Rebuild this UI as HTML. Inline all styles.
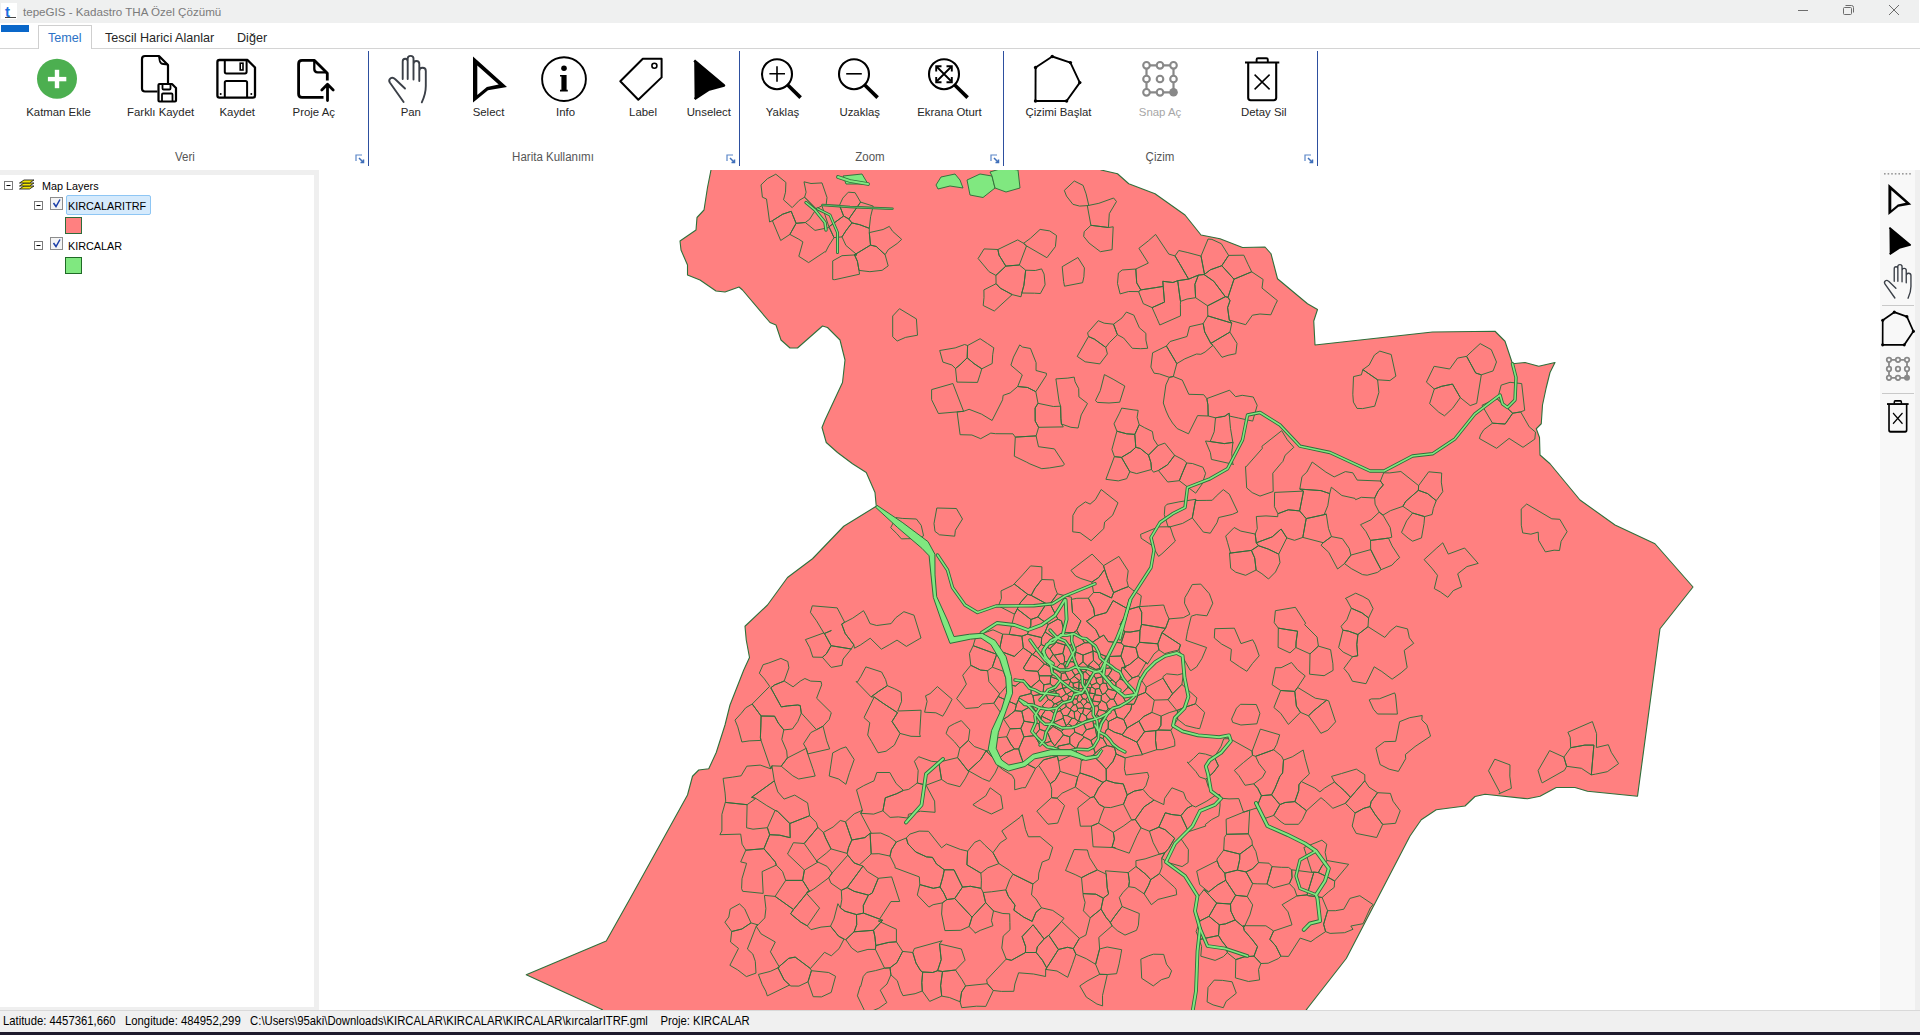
<!DOCTYPE html>
<html><head><meta charset="utf-8">
<style>
html,body{margin:0;padding:0;width:1920px;height:1035px;overflow:hidden;background:#fff;font-family:"Liberation Sans", sans-serif;}
.a{position:absolute;white-space:nowrap;}
.lbl{position:absolute;top:105px;font-size:11.4px;color:#262626;transform:translateX(-50%);line-height:14px;}
.grp{position:absolute;top:150px;font-size:12.3px;color:#555;transform:translateX(-50%) scaleX(0.935);line-height:14px;}
.tab{position:absolute;top:30px;font-size:12.6px;color:#262626;line-height:16px;}
.tree{position:absolute;font-size:11.4px;color:#000;line-height:13px;transform:scaleX(0.95);transform-origin:0 0;}
</style></head><body>
<div class="a" style="left:0;top:0;width:1920px;height:23px;background:#eff0f0;"></div>
<div class="a" style="left:1919px;top:0;width:1px;height:23px;background:#fff;"></div>
<div class="a" style="left:1px;top:3px;width:16px;height:16px;background:#fff;"></div>
<div class="a" style="left:23px;top:4px;font-size:11.6px;color:#7b7b7b;line-height:15px;">tepeGIS - Kadastro THA Özel Çözümü</div>
<div class="a" style="left:1px;top:25px;width:28px;height:7px;background:#0a67c9;"></div>
<div class="a" style="left:38px;top:25px;width:54px;height:24px;background:#fff;border:1px solid #cfcfcf;border-bottom:none;box-sizing:border-box;"></div>
<div class="a" style="left:0;top:48px;width:38px;height:1px;background:#d4d4d4;"></div>
<div class="a" style="left:92px;top:48px;width:1828px;height:1px;background:#d4d4d4;"></div>
<div class="tab" style="left:48px;color:#2b72c6;">Temel</div>
<div class="tab" style="left:105px;">Tescil Harici Alanlar</div>
<div class="tab" style="left:237px;">Diğer</div>
<div class="lbl" style="left:58.5px;">Katman Ekle</div>
<div class="lbl" style="left:160.6px;">Farklı Kaydet</div>
<div class="lbl" style="left:237.2px;">Kaydet</div>
<div class="lbl" style="left:313.8px;">Proje Aç</div>
<div class="lbl" style="left:410.8px;">Pan</div>
<div class="lbl" style="left:488.5px;">Select</div>
<div class="lbl" style="left:565.6px;">Info</div>
<div class="lbl" style="left:643px;">Label</div>
<div class="lbl" style="left:708.8px;">Unselect</div>
<div class="lbl" style="left:782.5px;">Yaklaş</div>
<div class="lbl" style="left:859.7px;">Uzaklaş</div>
<div class="lbl" style="left:949.5px;">Ekrana Oturt</div>
<div class="lbl" style="left:1058.5px;">Çizimi Başlat</div>
<div class="lbl" style="left:1160px;color:#a6a6a6;">Snap Aç</div>
<div class="lbl" style="left:1263.8px;">Detay Sil</div>
<div class="grp" style="left:185px;">Veri</div>
<div class="grp" style="left:553px;">Harita Kullanımı</div>
<div class="grp" style="left:870px;">Zoom</div>
<div class="grp" style="left:1160px;">Çizim</div>
<div class="a" style="left:368px;top:51px;width:1.3px;height:115px;background:#2d4f9f;"></div>
<div class="a" style="left:739px;top:51px;width:1.3px;height:115px;background:#2d4f9f;"></div>
<div class="a" style="left:1003px;top:51px;width:1.3px;height:115px;background:#2d4f9f;"></div>
<div class="a" style="left:1317px;top:51px;width:1.3px;height:115px;background:#2d4f9f;"></div>

<!-- left panel -->
<div class="a" style="left:0;top:170px;width:319px;height:840px;background:#efefef;"></div>
<div class="a" style="left:0;top:175px;width:314px;height:832px;background:#fff;"></div>
<div class="tree" style="left:42px;top:179.5px;">Map Layers</div>
<div class="a" style="left:66px;top:195px;width:85px;height:20px;background:#d5eafc;border:1px solid #8ec6f4;border-radius:2px;box-sizing:border-box;"></div>
<div class="tree" style="left:68px;top:199.5px;">KIRCALARITRF</div>
<div class="tree" style="left:68px;top:239.5px;">KIRCALAR</div>
<div class="a" style="left:65px;top:217px;width:17px;height:16.5px;background:#ff8080;border:1px solid #2e6b3b;box-sizing:border-box;"></div>
<div class="a" style="left:65px;top:257px;width:17px;height:16.5px;background:#80e880;border:1px solid #1f6a26;box-sizing:border-box;"></div>

<!-- map -->
<svg class="a" style="left:0;top:0;" width="1920" height="1035" viewBox="0 0 1920 1035">
<defs><clipPath id="mc"><rect x="319" y="170" width="1561" height="840"/></clipPath></defs>
<g clip-path="url(#mc)">
<polygon points="712.00,160.00 711.00,170.00 707.50,187.50 704.00,210.00 697.00,217.50 696.00,230.00 680.00,241.00 681.00,250.00 687.50,265.00 687.50,275.00 700.00,280.00 716.00,291.00 725.00,292.00 739.00,287.00 742.50,290.00 770.00,322.50 776.00,325.00 781.00,340.00 790.00,348.00 797.50,348.00 822.50,326.00 827.50,327.50 840.00,340.00 845.00,360.00 842.50,382.50 825.00,420.00 822.00,427.50 826.25,442.50 837.50,452.50 852.50,463.75 866.25,472.50 875.00,492.50 876.25,506.25 843.75,526.25 812.50,558.75 787.50,577.50 767.50,605.00 745.00,626.25 746.25,640.00 749.50,657.50 743.75,670.00 730.00,705.00 725.00,725.00 716.25,752.50 708.75,768.75 698.75,770.00 692.50,776.25 687.50,795.00 630.00,898.75 606.25,941.00 526.25,974.75 602.50,1009.75 580.00,1020.00 1320.00,1020.00 1306.25,1009.75 1346.25,958.50 1410.00,836.00 1421.25,819.75 1436.25,809.75 1465.00,806.00 1475.00,796.50 1485.00,794.25 1527.50,798.75 1540.00,796.25 1556.25,787.50 1575.00,787.50 1587.50,791.25 1637.50,796.25 1660.00,628.75 1693.00,587.00 1655.00,543.75 1615.00,525.00 1580.00,500.00 1550.00,463.75 1540.00,455.00 1539.50,437.50 1536.25,428.75 1541.25,423.75 1542.50,405.00 1546.25,387.50 1550.00,372.50 1555.00,362.50 1538.75,366.25 1525.00,362.50 1512.50,363.75 1505.00,341.25 1495.00,331.25 1432.50,332.00 1315.00,345.00 1313.75,321.00 1317.50,309.50 1307.50,303.75 1277.50,278.75 1271.00,253.75 1265.00,247.00 1242.50,247.50 1220.00,238.75 1201.00,235.00 1185.00,215.00 1155.00,193.75 1128.75,183.75 1117.50,173.75 1101.00,170.00 1095.00,160.00" fill="#ff8080" stroke="#2f6f3a" stroke-width="1.1" stroke-linejoin="round"/>
<path d="M1095.5 715.9 L1096.5 714.6 L1098.8 709.5 L1097.9 705.5 L1091.6 706.9 L1089.9 709.1 L1091.2 710.5ZM1103.1 738.6 L1107.1 745.6 L1114.5 747.4 L1116.1 754.0 L1125.2 757.9 L1134.4 755.7 L1142.5 754.8 L1136.9 742.2 L1129.1 738.3 L1122.8 735.6 L1122.3 734.7 L1114.4 732.2 L1108.2 728.7 L1106.2 730.0ZM740.7 861.9 L746.6 863.3 L742.0 878.7 L741.6 888.7 L742.7 891.3 L763.2 893.4 L762.1 871.6 L776.3 865.1 L775.4 862.1 L763.9 848.7 L745.8 850.2ZM1165.5 628.4 L1141.5 624.4 L1140.0 630.4 L1139.5 642.3 L1157.8 643.8 L1162.0 632.7ZM1124.0 645.8 L1135.9 647.7 L1139.5 642.3 L1140.0 630.4 L1130.1 632.1 L1124.8 631.8 L1121.2 642.9ZM1162.0 632.7 L1180.5 644.8 L1178.8 650.0 L1170.3 652.0 L1164.6 653.7 L1158.9 649.9 L1157.8 643.8ZM1120.1 624.8 L1124.8 631.8 L1130.1 632.1 L1140.0 630.4 L1141.5 624.4 L1141.7 612.3 L1139.0 606.6 L1128.8 609.5ZM1139.0 606.6 L1141.7 612.3 L1141.5 624.4 L1165.5 628.4 L1169.0 618.9 L1165.9 611.6 L1163.7 605.0 L1148.5 606.0 L1139.8 606.6ZM896.3 842.0 L891.4 849.8 L890.0 856.1 L895.0 866.1 L895.1 867.9 L919.3 876.9 L919.8 884.6 L933.3 888.3 L940.0 887.0 L943.0 876.3 L944.3 869.8 L936.4 863.9 L932.5 857.4 L926.6 856.9 L915.8 852.0 L908.0 843.9 L906.3 838.0ZM854.5 254.8 L857.0 254.8 L845.9 245.4 L842.0 236.9 L845.9 230.8 L851.9 222.9 L859.7 224.7 L869.3 228.3 L869.3 232.6 L870.5 245.1ZM848.8 219.0 L860.6 202.1 L873.2 206.1 L870.6 216.7 L869.3 228.3 L859.7 224.7 L851.9 222.9ZM882.1 270.3 L869.9 271.7 L859.0 270.4 L857.4 261.3 L854.5 254.8 L870.5 245.1 L876.3 246.5 L885.1 254.7 L888.2 265.9ZM1244.3 930.5 L1252.3 939.7 L1257.5 946.6 L1254.0 956.1 L1260.9 963.5 L1268.2 963.2 L1278.5 958.5 L1280.9 956.2 L1275.8 946.0 L1269.8 939.3 L1273.6 931.0 L1265.9 925.8 L1243.1 925.7ZM1062.8 688.3 L1061.5 681.2 L1068.7 679.5 L1070.1 679.6 L1070.4 681.4 L1067.8 687.2ZM1174.6 455.3 L1167.5 464.8 L1158.4 470.5 L1167.7 482.0 L1179.3 480.7 L1182.7 472.3 L1186.7 463.0 L1183.7 460.0ZM1179.3 480.7 L1195.7 493.2 L1202.1 484.0 L1205.6 473.3 L1202.9 467.2 L1192.4 463.5 L1186.7 463.0 L1182.7 472.3ZM1174.6 455.3 L1167.5 464.8 L1158.4 470.5 L1153.5 472.2 L1151.5 469.5 L1150.9 462.6 L1148.5 455.1 L1157.9 445.6 L1164.8 443.1ZM1024.0 721.2 L1021.8 711.3 L1015.0 710.7 L1007.6 716.7 L1003.7 719.1 L1010.1 728.8 L1020.9 728.4ZM1024.0 721.2 L1021.8 711.3 L1031.8 705.7 L1041.3 718.6 L1039.0 723.6ZM1032.9 695.7 L1034.5 704.0 L1031.8 705.7 L1021.8 711.3 L1015.0 710.7 L1016.4 704.7 L1019.8 696.4 L1031.1 693.5ZM1110.3 922.5 L1106.0 917.3 L1101.0 909.1 L1090.2 917.8 L1085.9 935.1 L1079.4 938.4 L1073.3 948.6 L1075.9 954.2 L1086.3 958.7 L1095.6 964.3 L1099.6 949.0 L1098.8 937.4 L1112.1 925.8ZM1054.7 669.3 L1053.5 668.8 L1046.0 664.5 L1053.2 654.3 L1054.1 655.2 L1060.3 663.6ZM1053.2 654.3 L1049.9 648.6 L1056.2 642.4 L1065.0 645.0 L1062.8 653.4 L1054.1 655.2ZM1282.9 461.4 L1285.1 455.3 L1293.8 447.3 L1287.3 439.8 L1281.7 430.7 L1261.9 446.3 L1262.4 448.3 L1246.0 466.9 L1245.5 466.7 L1246.7 487.9 L1252.2 492.6 L1260.0 496.1 L1273.2 491.5 L1272.8 473.2 L1281.2 463.2ZM906.4 646.4 L919.4 638.8 L921.0 638.0 L914.0 615.2 L903.9 611.7 L895.8 617.7 L891.1 623.6 L876.7 625.5 L870.0 623.6 L866.2 615.4 L863.5 610.7 L852.7 618.2 L844.7 622.3 L841.7 624.0 L845.2 633.5 L853.8 644.8 L854.5 648.2 L860.7 644.8 L870.2 638.2 L881.4 649.2 L889.2 644.8 L897.0 640.1ZM1071.0 709.9 L1067.5 715.7 L1071.9 718.2 L1074.8 718.6 L1074.2 711.7ZM1203.2 323.6 L1207.8 315.9 L1231.8 323.1 L1229.9 332.1 L1210.8 343.4 L1204.7 331.9ZM1210.8 343.4 L1229.9 332.1 L1237.0 343.4 L1235.8 353.7 L1228.0 355.3 L1222.0 357.3 L1213.0 345.3ZM1228.0 297.3 L1230.0 300.7 L1227.6 307.7 L1229.3 320.1 L1231.8 323.1 L1207.8 315.9 L1207.6 305.8 L1225.3 296.7ZM1056.6 694.9 L1051.5 700.6 L1048.3 699.5 L1045.6 693.7 L1054.3 690.9 L1055.7 691.0ZM1113.6 592.6 L1107.5 578.3 L1104.6 569.4 L1098.7 577.5 L1091.9 582.0 L1093.5 592.5 L1099.6 592.5 L1111.5 598.0ZM1051.1 741.2 L1039.9 744.8 L1034.8 735.6 L1039.7 729.3 L1047.3 732.0ZM1036.1 435.9 L1015.3 437.1 L1014.3 456.2 L1026.5 462.1 L1029.9 463.9 L1041.8 468.7 L1049.6 467.9 L1063.1 465.7 L1064.4 464.1 L1054.4 448.9 L1038.5 446.7ZM1135.2 819.5 L1141.0 827.9 L1136.9 835.7 L1129.2 853.2 L1112.0 847.2 L1114.4 839.0 L1113.3 832.3 L1123.2 826.2 L1131.6 820.0ZM1143.0 789.4 L1134.3 791.1 L1127.2 794.9 L1123.5 804.1 L1131.6 820.0 L1135.2 819.5 L1144.0 806.9 L1154.1 800.1 L1149.2 796.6ZM1096.8 736.2 L1103.1 738.6 L1107.1 745.6 L1100.7 748.3 L1095.3 753.2 L1090.9 740.5ZM1060.6 680.5 L1050.7 676.6 L1052.0 675.8 L1053.5 668.8 L1054.7 669.3 L1061.5 673.3ZM1114.4 456.6 L1111.9 449.5 L1116.9 431.2 L1126.7 433.8 L1134.8 434.4 L1135.8 447.3 L1130.8 451.8 L1121.5 457.4ZM1126.7 478.7 L1118.3 480.9 L1105.9 479.3 L1114.4 456.6 L1121.5 457.4 L1129.8 471.7ZM1138.2 410.4 L1133.1 409.8 L1121.7 408.1 L1119.4 413.2 L1114.0 423.8 L1116.9 431.2 L1126.7 433.8 L1134.8 434.4 L1139.2 424.7 L1137.1 417.3ZM1129.8 471.7 L1136.7 473.6 L1151.5 469.5 L1150.9 462.6 L1148.5 455.1 L1140.3 448.5 L1135.8 447.3 L1130.8 451.8 L1121.5 457.4ZM1014.3 656.4 L999.2 650.8 L1002.7 634.1 L1009.2 634.4 L1021.9 636.2 L1023.3 647.9ZM1032.6 654.8 L1032.1 653.9 L1023.3 647.9 L1021.9 636.2 L1027.4 634.2 L1036.2 636.3 L1041.7 637.6 L1041.2 644.5ZM1092.6 719.4 L1094.1 727.6 L1094.9 726.3 L1097.7 726.9 L1102.4 718.4 L1096.5 714.6 L1095.5 715.9ZM1049.0 859.4 L1052.7 847.2 L1040.1 836.7 L1028.4 836.8 L1025.6 829.6 L1022.3 814.7 L1020.0 817.4 L1001.8 830.9 L1006.7 838.6 L1000.2 842.9 L993.0 852.7 L998.9 863.6 L1009.5 870.4 L1013.0 874.2 L1032.9 884.0 L1038.4 879.6 L1038.8 873.1 L1042.2 862.0ZM1080.3 701.9 L1082.7 698.7 L1080.8 694.7 L1079.0 694.0 L1076.8 699.2 L1078.3 702.2ZM1048.2 624.4 L1045.1 631.9 L1041.7 637.6 L1036.2 636.3 L1027.4 634.2 L1030.8 625.4 L1030.9 619.5 L1037.8 617.0ZM1049.9 648.6 L1056.2 642.4 L1055.8 639.3 L1045.1 631.9 L1041.7 637.6 L1041.2 644.5ZM1133.8 315.1 L1126.4 312.1 L1122.0 317.9 L1113.5 324.2 L1117.4 334.7 L1123.6 338.0 L1132.3 348.3 L1140.7 348.7 L1147.7 348.3 L1145.9 340.1 L1145.9 333.3 L1139.4 327.8ZM980.6 670.1 L970.8 665.3 L962.7 675.3 L966.4 684.1 L956.6 698.6 L965.7 708.5 L978.3 707.5 L982.4 704.0 L993.9 703.2 L998.1 696.5 L999.7 694.0 L988.9 681.6 L987.6 670.7ZM1083.8 707.9 L1083.4 705.7 L1087.1 702.2 L1091.5 703.5 L1091.6 706.9 L1089.9 709.1 L1083.9 708.1ZM1095.4 689.2 L1095.2 693.7 L1094.4 694.7 L1101.4 695.7 L1102.4 694.6 L1099.5 688.2ZM1066.0 725.6 L1068.3 723.8 L1071.9 718.2 L1067.5 715.7 L1063.0 715.4 L1063.3 718.2ZM1345.4 803.3 L1350.5 797.3 L1364.8 780.8 L1369.0 787.2 L1377.6 792.7 L1371.1 801.7 L1370.1 806.6 L1363.8 808.3 L1355.1 813.0ZM1356.3 769.1 L1364.8 774.7 L1364.8 780.8 L1350.5 797.3 L1344.4 790.8 L1334.5 782.0 L1331.5 776.4 L1341.6 773.5ZM1382.7 824.4 L1395.5 823.3 L1400.2 810.8 L1393.0 801.2 L1390.4 793.4 L1377.6 792.7 L1371.1 801.7 L1370.1 806.6 L1375.1 814.5ZM1139.0 606.6 L1139.8 606.6 L1141.3 595.8 L1132.2 589.6 L1128.4 586.6 L1121.7 589.1 L1113.6 592.6 L1111.5 598.0 L1099.6 592.5 L1093.5 592.5 L1088.4 598.2 L1093.6 608.2 L1094.7 615.9 L1106.5 612.6 L1113.1 600.6 L1128.8 609.5ZM1096.5 714.6 L1098.8 709.5 L1106.2 711.4 L1104.2 717.0 L1102.4 718.4ZM1092.3 700.9 L1100.3 702.1 L1097.9 705.5 L1091.6 706.9 L1091.5 703.5ZM1305.6 623.1 L1295.4 607.3 L1275.4 610.7 L1274.2 622.6 L1278.3 628.1 L1285.3 629.3 L1297.6 631.2 L1296.1 641.9 L1295.9 647.5 L1304.0 651.2 L1310.0 653.9 L1318.4 646.1 L1317.1 637.1 L1304.6 624.6ZM816.4 822.6 L809.7 815.7 L789.8 823.5 L790.2 837.7 L779.8 835.2 L769.7 834.7 L763.9 848.7 L775.4 862.1 L776.3 865.1 L782.6 871.6 L785.7 880.4 L802.6 880.4 L804.4 870.1 L787.5 854.0 L793.4 842.7 L804.2 843.5 L817.8 827.4ZM1087.1 719.1 L1083.1 722.7 L1086.3 729.8 L1094.1 727.6 L1092.6 719.4ZM1306.2 518.6 L1299.6 510.9 L1288.3 509.8 L1277.9 513.7 L1277.7 516.7 L1266.0 515.9 L1256.3 516.5 L1257.3 528.7 L1255.2 534.0 L1256.3 542.8 L1272.2 536.9 L1281.1 529.0 L1286.8 537.9 L1294.5 540.3 L1302.8 537.4ZM1432.1 552.3 L1424.1 559.6 L1431.8 568.1 L1437.5 575.3 L1434.3 588.6 L1440.3 591.9 L1447.8 597.3 L1453.3 590.6 L1461.7 586.8 L1457.7 573.8 L1466.9 566.6 L1478.2 563.4 L1464.6 548.0 L1448.3 554.1 L1442.8 542.8 L1436.2 548.5ZM1204.5 274.3 L1201.0 256.1 L1187.9 252.6 L1178.8 250.5 L1175.0 255.9 L1180.5 265.2 L1188.6 279.1 L1198.4 275.1 L1204.0 274.5ZM1188.6 279.1 L1198.4 275.1 L1194.9 284.3 L1195.6 297.7 L1187.1 299.0 L1180.5 301.4 L1179.3 292.9 L1177.7 280.7ZM1204.5 274.3 L1210.4 269.8 L1221.8 265.7 L1234.0 279.2 L1228.0 297.3 L1225.3 296.7 L1213.8 281.3 L1204.0 274.5ZM1204.0 274.5 L1198.4 275.1 L1194.9 284.3 L1195.6 297.7 L1207.6 305.8 L1225.3 296.7 L1213.8 281.3ZM1204.5 274.3 L1201.0 256.1 L1208.1 239.0 L1211.9 239.4 L1221.3 243.7 L1228.6 255.4 L1221.8 265.7 L1210.4 269.8ZM1057.8 619.1 L1061.5 620.9 L1064.3 632.5 L1073.5 632.6 L1076.7 630.5 L1080.9 620.9 L1072.5 612.4 L1071.4 599.4 L1071.5 597.3 L1057.4 593.8 L1050.1 603.8ZM780.9 658.4 L768.7 663.0 L763.1 664.7 L759.3 673.2 L764.4 678.9 L769.7 686.3 L752.2 704.0 L761.1 716.0 L774.6 716.2 L778.3 723.1 L783.8 729.9 L792.4 729.0 L797.8 721.5 L801.3 713.0 L800.2 705.5 L797.7 705.0 L787.6 705.9 L781.3 706.9 L770.8 687.8 L774.5 685.0 L784.2 681.0 L788.9 667.8 L787.8 661.5ZM1113.6 592.6 L1107.5 578.3 L1104.6 569.4 L1103.5 565.7 L1118.9 556.4 L1128.2 570.8 L1126.9 580.6 L1128.4 586.6 L1121.7 589.1ZM1104.6 569.4 L1098.7 577.5 L1091.9 582.0 L1080.9 578.5 L1075.7 576.0 L1070.9 570.4 L1092.1 554.1 L1103.5 565.7ZM891.7 876.9 L878.3 878.3 L872.2 893.1 L868.4 895.1 L863.3 905.5 L863.5 913.1 L879.6 919.1 L890.9 901.6 L899.6 901.5 L899.6 901.1ZM1078.6 682.0 L1079.3 680.5 L1074.2 676.4 L1070.1 679.6 L1070.4 681.4 L1073.1 683.2ZM764.8 917.9 L758.0 924.9 L756.2 926.3 L761.1 933.9 L775.3 942.0 L770.4 951.8 L779.1 966.6 L788.8 958.3 L795.2 957.1 L810.4 968.5 L824.5 952.3 L831.3 955.8 L839.1 948.6 L844.0 939.1 L838.6 936.2 L830.5 926.2 L821.0 927.1 L811.0 929.7 L807.3 925.9 L800.7 922.1 L790.6 913.8 L793.5 909.5 L775.1 896.4 L764.4 895.4 L765.9 908.6ZM1136.9 742.2 L1142.5 754.8 L1142.9 754.2 L1156.7 749.7 L1155.5 740.3 L1155.8 730.6 L1144.5 731.7ZM1170.9 730.3 L1174.6 740.3 L1174.9 745.9 L1162.0 749.7 L1156.7 749.7 L1155.5 740.3 L1155.8 730.6 L1158.1 730.0ZM1127.1 728.0 L1138.9 721.1 L1144.5 731.7 L1136.9 742.2 L1129.1 738.3 L1122.8 735.6 L1122.3 734.7ZM1108.4 227.5 L1109.3 213.6 L1116.5 201.5 L1113.6 198.0 L1098.9 203.3 L1088.8 205.4 L1087.3 205.6 L1090.9 225.3ZM1087.3 205.6 L1079.6 206.1 L1072.9 204.3 L1066.5 196.1 L1064.3 190.4 L1074.3 181.0 L1083.1 185.4 L1086.1 193.9 L1088.8 205.4ZM1083.7 236.4 L1089.1 243.1 L1100.4 251.7 L1112.1 249.7 L1113.2 226.8 L1108.4 227.5 L1090.9 225.3 L1084.2 231.7ZM1096.9 682.7 L1095.8 678.4 L1093.6 675.1 L1089.7 676.0 L1088.0 679.8 L1091.5 685.2ZM1068.9 696.2 L1067.2 701.3 L1072.5 701.8 L1073.7 698.7 L1072.4 696.7ZM1090.4 797.7 L1075.3 787.0 L1077.8 776.9 L1079.9 772.9 L1092.7 777.1 L1103.0 782.4 L1098.4 788.2 L1094.0 796.7ZM1050.2 783.7 L1051.7 789.2 L1051.5 797.7 L1057.0 798.2 L1062.1 793.2 L1075.3 787.0 L1077.8 776.9 L1060.1 771.4 L1055.2 780.1ZM837.2 607.9 L812.3 605.8 L810.4 612.3 L816.5 620.8 L824.2 633.6 L831.4 630.5 L824.4 633.5 L831.1 645.7 L851.3 649.0 L853.8 644.8 L845.2 633.5 L841.7 624.0 L844.7 622.3ZM1224.8 873.2 L1237.4 870.1 L1246.0 871.9 L1252.6 883.6 L1247.2 896.5 L1235.6 895.3 L1225.7 880.3ZM1237.4 870.1 L1239.7 859.5 L1239.8 854.1 L1252.3 844.9 L1255.9 851.5 L1258.5 862.6 L1252.5 868.9 L1246.0 871.9ZM1208.6 891.9 L1217.6 884.9 L1225.7 880.3 L1224.8 873.2 L1219.4 866.9 L1217.1 860.8 L1196.7 871.1 L1199.7 884.6ZM890.9 974.8 L897.3 980.7 L900.5 990.6 L903.0 995.7 L915.1 993.7 L922.3 991.0 L921.8 982.6 L922.7 972.0 L920.6 970.7 L916.0 963.1 L912.8 952.5 L902.6 951.4 L896.9 962.6 L890.0 967.8ZM1282.1 904.7 L1288.0 911.8 L1292.0 924.8 L1273.6 931.0 L1269.8 939.3 L1275.8 946.0 L1280.9 956.2 L1288.5 956.4 L1300.2 938.1 L1310.9 941.7 L1315.8 938.1 L1325.6 931.6 L1323.6 924.2 L1327.6 910.7 L1322.1 897.5 L1308.5 895.7 L1307.0 894.9 L1296.9 895.9ZM1048.2 624.4 L1045.1 631.9 L1055.8 639.3 L1056.2 642.4 L1065.0 645.0 L1071.3 645.1 L1073.5 632.6 L1064.3 632.5 L1061.5 620.9 L1057.8 619.1ZM920.5 811.2 L935.1 812.3 L934.6 801.1 L926.1 785.2 L917.3 783.0 L908.7 789.4 L903.4 790.4 L896.7 793.7 L885.3 797.8 L882.9 810.8 L890.1 817.4 L898.3 816.9 L908.0 818.1 L908.4 814.3ZM1088.5 336.5 L1094.5 339.2 L1105.8 347.4 L1109.3 342.7 L1117.4 334.7 L1113.5 324.2 L1104.2 323.2 L1098.3 320.7 L1087.6 332.9ZM1093.0 651.3 L1092.7 650.6 L1106.2 656.5 L1098.9 665.4 L1093.5 660.4ZM1243.5 762.5 L1252.5 755.3 L1252.1 751.2 L1229.7 738.6 L1223.7 738.8 L1221.1 746.2 L1214.4 757.0 L1218.4 765.8 L1213.2 772.7 L1205.9 779.1 L1208.2 786.5 L1215.3 795.4 L1219.6 794.6 L1221.1 798.2 L1229.0 798.9 L1238.8 798.6 L1243.5 812.2 L1249.7 810.2 L1256.4 808.1 L1261.4 795.7 L1257.8 788.5 L1253.8 783.8 L1245.1 785.3 L1238.9 775.6 L1234.3 770.4ZM1521.2 509.1 L1521.3 525.2 L1522.7 532.9 L1530.9 534.2 L1538.2 532.1 L1538.6 540.4 L1545.4 551.9 L1554.1 550.2 L1559.5 550.5 L1561.1 541.3 L1567.1 531.7 L1559.8 519.3 L1551.8 518.8 L1526.7 504.0ZM1034.5 704.0 L1031.8 705.7 L1041.3 718.6 L1041.4 716.1 L1045.5 710.1 L1042.4 705.8 L1048.3 699.5 L1045.6 693.7 L1043.0 694.1 L1032.9 695.7ZM851.8 840.0 L848.6 847.4 L847.2 853.4 L847.8 855.2 L854.1 862.9 L859.3 864.9 L865.7 859.2 L871.2 853.9 L870.1 833.3 L864.9 837.6ZM851.8 840.0 L845.5 821.8 L840.3 820.5 L833.1 827.0 L823.4 832.4 L825.6 837.9 L831.0 848.9 L847.2 853.4 L848.6 847.4ZM1054.7 745.9 L1051.1 741.2 L1039.9 744.8 L1034.8 735.6 L1023.9 736.8 L1018.7 748.9 L1020.0 753.8 L1023.0 762.0 L1035.6 768.4 L1038.6 765.5 L1043.5 759.9 L1051.9 757.6 L1057.4 756.2 L1058.0 746.2 L1069.8 743.7 L1069.7 736.8 L1063.4 734.9ZM1095.8 678.4 L1102.7 676.6 L1103.2 676.9 L1099.7 669.1 L1100.2 668.4 L1095.9 669.5 L1093.6 675.1ZM1128.0 687.3 L1121.5 693.7 L1126.9 704.3 L1131.9 704.2 L1133.9 704.3 L1138.0 695.4ZM1113.7 699.2 L1117.1 692.3 L1121.5 693.7 L1126.9 704.3 L1117.3 705.6ZM1120.0 678.8 L1115.9 682.8 L1115.8 691.0 L1117.1 692.3 L1121.5 693.7 L1128.0 687.3 L1127.1 682.4ZM1132.4 678.0 L1138.4 675.8 L1146.3 687.1 L1145.4 692.4 L1138.0 695.4 L1128.0 687.3 L1127.1 682.4ZM878.7 691.3 L871.1 696.9 L874.2 697.0 L883.3 703.4 L897.5 712.7 L892.0 721.5 L900.0 733.4 L911.0 736.3 L920.4 736.5 L919.7 734.3 L921.1 710.2 L897.7 711.0 L901.6 701.3 L901.1 692.2 L894.7 688.8 L887.3 685.7ZM1033.6 974.0 L1045.6 976.5 L1045.7 969.4 L1046.7 967.9 L1042.5 960.3 L1036.2 952.5 L1025.5 952.5 L1011.4 960.3 L1006.2 959.1 L986.6 979.9 L987.4 983.7 L993.3 990.5 L1001.4 991.4 L1013.8 991.3 L1014.9 984.0 L1018.6 972.8ZM969.1 926.5 L974.7 932.2 L975.0 933.2 L980.2 930.4 L993.0 925.7 L991.4 920.7 L993.5 910.9 L985.6 902.5 L972.0 917.1ZM954.7 898.5 L962.5 887.1 L970.4 886.3 L981.1 888.3 L983.2 892.5 L985.6 902.5 L972.0 917.1ZM938.8 762.2 L941.5 779.4 L947.4 783.4 L959.9 786.7 L965.1 778.8 L969.1 771.1 L968.1 771.0 L957.6 757.6ZM986.1 750.8 L980.6 759.6 L968.1 771.0 L969.1 771.1 L982.6 778.7 L989.4 781.4 L995.0 773.1 L998.4 765.8 L996.3 761.1ZM959.8 748.3 L968.4 740.4 L974.3 746.5 L987.6 751.2 L986.1 750.8 L980.6 759.6 L968.1 771.0 L957.6 757.6ZM939.4 762.0 L931.5 761.3 L918.6 756.7 L914.4 761.3 L918.2 770.4 L917.3 783.0 L926.1 785.2 L941.5 779.4 L938.8 762.2ZM1216.2 496.1 L1212.2 500.3 L1206.1 500.4 L1195.6 500.5 L1195.7 499.3 L1192.3 517.9 L1197.9 525.1 L1203.4 532.1 L1210.3 533.2 L1217.0 522.7 L1218.7 517.5 L1232.3 514.4 L1237.8 512.0 L1229.3 494.2 L1223.3 489.6ZM1383.3 484.9 L1378.1 491.0 L1374.7 498.0 L1375.1 504.2 L1379.2 512.2 L1383.0 515.1 L1390.4 510.7 L1402.9 506.3 L1405.7 501.4 L1418.4 490.3 L1418.6 485.6 L1400.9 471.5 L1389.7 472.9 L1383.7 472.8 L1380.4 481.0ZM1096.9 682.7 L1100.0 685.0 L1103.1 683.0 L1102.7 676.6 L1095.8 678.4ZM1008.3 896.2 L1005.8 889.9 L991.4 891.8 L983.2 892.5 L985.6 902.5 L993.5 910.9 L1002.9 913.5 L1009.7 913.8 L1009.9 922.6 L1010.0 929.8 L1003.2 936.1 L1001.8 948.0 L1006.2 959.1 L1011.4 960.3 L1025.5 952.5 L1025.6 946.5 L1022.1 936.6 L1033.1 924.8 L1037.7 930.7 L1044.1 938.9 L1048.8 935.3 L1061.5 921.4 L1064.0 918.3 L1052.7 910.4 L1041.5 907.8 L1036.0 912.2 L1032.2 921.4 L1023.8 917.2 L1013.9 910.2 L1015.0 905.1ZM1370.5 540.4 L1370.7 549.6 L1376.0 560.1 L1381.1 569.7 L1391.9 565.2 L1396.0 560.8 L1399.7 557.6 L1392.1 545.9 L1388.5 538.1ZM1377.5 572.4 L1381.1 569.7 L1376.0 560.1 L1370.7 549.6 L1350.9 555.1 L1344.5 563.6 L1351.3 568.6 L1362.5 574.6 L1367.2 575.2ZM1072.5 612.4 L1080.9 620.9 L1076.7 630.5 L1080.1 635.8 L1084.6 642.8 L1091.9 642.6 L1099.6 637.5 L1095.8 629.7 L1086.5 621.2 L1094.7 615.9 L1093.6 608.2 L1088.4 598.2 L1076.8 598.3 L1071.4 599.4ZM1415.1 746.5 L1430.5 736.2 L1430.2 734.8 L1426.9 724.8 L1421.8 719.9 L1422.2 715.5 L1409.7 717.7 L1399.6 721.7 L1395.7 741.3 L1384.4 741.7 L1375.9 748.1 L1378.6 759.2 L1380.2 764.6 L1389.2 769.2 L1398.4 771.4 L1405.7 758.7 L1405.4 754.5ZM1050.3 710.5 L1045.5 710.1 L1042.4 705.8 L1048.3 699.5 L1051.5 700.6 L1054.2 703.9ZM1084.2 737.0 L1079.0 742.6 L1076.4 748.8 L1076.3 753.0 L1081.3 760.6 L1092.8 755.5 L1095.3 753.2 L1090.9 740.5ZM1058.5 761.2 L1076.3 753.0 L1076.4 748.8 L1069.8 743.7 L1058.0 746.2 L1057.4 756.2ZM1481.3 374.8 L1493.1 370.9 L1496.5 362.0 L1491.3 349.7 L1480.2 343.6 L1472.8 350.4 L1466.6 356.3 L1475.7 373.0ZM1053.0 726.4 L1047.3 732.0 L1051.1 741.2 L1054.7 745.9 L1063.4 734.9 L1061.5 731.5ZM1054.6 722.0 L1052.5 721.5 L1041.4 716.1 L1041.3 718.6 L1039.0 723.6 L1039.7 729.3 L1047.3 732.0 L1053.0 726.4ZM1334.7 881.0 L1334.2 887.4 L1328.3 892.0 L1322.1 897.5 L1308.5 895.7 L1307.0 894.9 L1313.9 872.1 L1318.3 872.6 L1326.8 876.6ZM1326.9 860.5 L1322.0 865.9 L1318.3 872.6 L1313.9 872.1 L1311.9 872.4 L1303.9 847.5 L1321.9 840.2 L1326.8 844.2 L1325.1 852.3ZM1064.5 661.6 L1063.6 664.1 L1060.3 663.6 L1054.1 655.2 L1062.8 653.4 L1064.4 657.0ZM1138.0 695.4 L1133.9 704.3 L1131.9 704.2 L1130.7 710.1 L1123.7 719.5 L1127.1 728.0 L1138.9 721.1 L1143.9 716.4 L1151.9 712.4 L1154.3 700.1 L1145.4 692.4ZM1103.7 635.1 L1099.6 637.5 L1091.9 642.6 L1092.7 650.6 L1106.2 656.5 L1105.9 656.3 L1108.9 656.5 L1120.9 656.0 L1124.0 645.8 L1121.2 642.9 L1108.2 641.6ZM1466.6 356.3 L1457.6 358.1 L1449.7 369.0 L1434.1 366.3 L1426.4 382.1 L1434.3 389.0 L1441.7 386.3 L1452.5 384.1 L1460.3 397.6 L1470.2 405.6 L1476.7 403.3 L1481.3 374.8 L1475.7 373.0ZM1086.2 716.0 L1082.5 713.4 L1083.9 708.1 L1089.9 709.1 L1091.2 710.5ZM824.1 632.8 L805.4 639.6 L809.8 647.8 L812.8 657.1 L822.4 657.3 L826.3 653.9 L831.1 645.7ZM1101.0 909.1 L1103.3 898.2 L1095.9 894.2 L1083.0 893.6 L1083.3 896.0 L1085.1 902.4 L1083.4 910.8 L1090.2 917.8ZM1108.6 894.0 L1103.3 898.2 L1095.9 894.2 L1083.0 893.6 L1081.5 877.7 L1089.2 873.7 L1097.3 870.0 L1106.2 874.1 L1107.2 887.7ZM1109.7 668.0 L1099.7 669.1 L1100.2 668.4 L1098.9 665.4 L1106.2 656.5 L1105.9 656.3 L1108.9 656.5ZM916.4 519.0 L902.2 518.4 L895.9 517.6 L890.7 527.7 L896.8 533.6 L901.4 538.9 L907.1 538.7 L917.4 538.7 L923.6 535.8 L921.2 525.3ZM1067.0 694.2 L1066.1 693.8 L1062.9 687.9 L1062.8 688.3 L1067.8 687.2 L1071.9 689.2 L1072.0 690.7ZM1436.2 500.7 L1442.8 491.6 L1441.3 482.1 L1441.7 473.0 L1428.7 471.8 L1418.6 485.6 L1418.4 490.3 L1427.6 493.6ZM1432.1 514.5 L1433.3 508.5 L1436.2 500.7 L1427.6 493.6 L1418.4 490.3 L1405.7 501.4 L1402.9 506.3 L1412.6 513.0 L1424.6 516.6ZM1125.6 667.2 L1120.9 656.0 L1124.0 645.8 L1135.9 647.7 L1138.3 657.1 L1129.7 664.4 L1123.3 667.6ZM1147.6 663.8 L1154.0 653.9 L1158.9 649.9 L1157.8 643.8 L1139.5 642.3 L1135.9 647.7 L1138.3 657.1ZM1053.2 654.3 L1049.9 648.6 L1041.2 644.5 L1032.6 654.8 L1037.0 657.1 L1044.4 664.0 L1046.0 664.5ZM942.3 902.9 L946.8 899.6 L943.8 893.0 L940.0 887.0 L933.3 888.3 L919.8 884.6 L917.3 895.0 L928.9 907.1 L933.1 904.7ZM942.3 902.9 L946.8 899.6 L954.7 898.5 L972.0 917.1 L969.1 926.5 L960.6 930.3 L944.9 930.6 L941.6 914.0ZM1164.6 798.3 L1163.8 804.6 L1154.1 800.1 L1144.0 806.9 L1135.2 819.5 L1141.0 827.9 L1149.4 831.2 L1158.8 827.2 L1165.3 812.8 L1171.6 814.5 L1181.0 815.6 L1187.1 808.2 L1192.3 805.6 L1186.2 799.5 L1183.5 792.3 L1171.9 787.8ZM1221.8 940.9 L1226.6 947.0 L1227.3 952.7 L1235.8 959.6 L1244.0 956.9 L1254.0 956.1 L1257.5 946.6 L1252.3 939.7 L1244.3 930.5 L1243.5 927.1 L1235.1 920.0 L1225.4 923.9 L1219.3 924.8 L1218.5 935.5ZM1243.5 812.2 L1226.1 819.3 L1226.5 834.3 L1248.4 833.8 L1249.7 810.2ZM1136.0 866.5 L1145.9 874.4 L1150.7 879.7 L1148.6 885.2 L1144.1 893.8 L1134.9 887.6 L1128.6 886.7 L1129.4 881.6 L1128.2 872.6ZM1158.8 827.2 L1165.1 829.7 L1174.7 838.3 L1168.7 848.4 L1164.8 852.8 L1161.7 858.4 L1168.2 862.6 L1182.1 866.6 L1188.1 862.6 L1188.4 849.6 L1180.5 838.1 L1188.5 831.7 L1181.0 815.6 L1171.6 814.5 L1165.3 812.8ZM1123.7 719.5 L1127.1 728.0 L1122.3 734.7 L1114.4 732.2 L1108.2 728.7 L1108.3 721.6 L1117.1 717.2ZM1345.4 803.3 L1350.5 797.3 L1344.4 790.8 L1334.5 782.0 L1324.7 788.0 L1319.9 791.9 L1314.7 787.9 L1301.2 781.5 L1298.9 784.8 L1298.7 790.7 L1294.9 801.6 L1306.5 810.7 L1321.0 797.7 L1325.2 801.1 L1332.9 808.3ZM1255.6 756.3 L1273.7 749.7 L1276.7 744.4 L1279.7 734.8 L1260.4 729.1 L1252.1 751.2 L1252.5 755.3ZM1067.7 977.3 L1057.0 971.0 L1045.7 969.4 L1046.7 967.9 L1058.4 949.5 L1067.5 947.3 L1073.3 948.6 L1075.9 954.2 L1072.4 964.5ZM1046.7 967.9 L1058.4 949.5 L1048.8 935.3 L1044.1 938.9 L1037.3 946.9 L1036.2 952.5 L1042.5 960.3ZM887.0 984.0 L890.9 974.8 L890.0 967.8 L884.6 968.2 L875.5 970.6 L866.8 972.4 L863.3 976.4 L860.7 986.5 L860.2 986.2 L857.4 995.8 L865.9 1013.5 L878.8 1008.2 L886.8 1002.6 L880.2 990.2ZM1566.6 766.3 L1581.4 768.3 L1591.3 774.9 L1593.9 745.1 L1584.9 745.1 L1570.7 747.7 L1563.9 757.1ZM1082.0 678.2 L1083.4 672.1 L1085.6 671.8 L1089.7 676.0 L1088.0 679.8 L1085.9 680.0ZM1082.2 735.3 L1074.8 732.1 L1074.0 727.5 L1078.4 721.3 L1083.1 722.7 L1086.3 729.8ZM775.8 174.2 L767.4 178.7 L761.0 184.9 L762.4 197.2 L766.5 199.0 L769.6 222.0 L772.4 220.7 L782.7 214.2 L791.2 211.3 L796.1 223.3 L805.3 222.5 L809.7 219.2 L816.2 208.9 L804.6 197.2 L799.2 200.4 L792.2 207.6 L783.5 199.8 L785.5 192.2 L785.9 182.4ZM1023.3 647.9 L1014.3 656.4 L999.2 650.8 L996.7 654.3 L992.3 667.2 L1003.4 671.3 L1008.1 684.2 L1015.4 686.1 L1023.4 679.5 L1031.1 687.2 L1039.6 679.9 L1039.3 675.8 L1037.8 671.3 L1025.7 670.5 L1023.4 668.0 L1032.1 653.9ZM1103.1 683.0 L1100.0 685.0 L1099.5 688.2 L1102.4 694.6 L1105.3 692.9 L1108.0 689.0 L1106.1 683.5ZM1216.7 903.1 L1230.5 904.0 L1230.8 911.0 L1235.1 920.0 L1225.4 923.9 L1219.3 924.8 L1209.0 916.3ZM1244.0 927.5 L1249.9 914.9 L1252.7 904.9 L1247.2 896.5 L1235.6 895.3 L1230.5 904.0 L1230.8 911.0 L1235.1 920.0ZM1204.0 889.6 L1197.5 897.8 L1195.0 909.3 L1200.0 920.9 L1209.0 916.3 L1216.7 903.1ZM1209.0 916.3 L1219.3 924.8 L1218.5 935.5 L1199.3 939.5 L1196.1 931.5 L1200.0 920.9ZM1092.3 700.9 L1100.3 702.1 L1101.2 700.3 L1101.4 695.7 L1094.4 694.7 L1092.9 699.8ZM1272.1 684.7 L1275.4 667.7 L1281.1 667.7 L1291.5 662.5 L1297.5 669.8 L1305.2 675.9 L1297.6 687.4 L1294.8 691.4 L1280.7 690.5ZM1294.8 691.4 L1296.4 706.1 L1300.4 712.3 L1308.5 715.8 L1313.7 710.7 L1326.6 700.2 L1315.3 698.2 L1297.6 687.4ZM1280.7 690.5 L1273.9 707.5 L1280.7 713.3 L1288.4 724.4 L1292.9 720.0 L1300.4 712.3 L1296.4 706.1 L1294.8 691.4ZM1352.5 656.7 L1343.2 652.1 L1338.6 647.6 L1342.9 630.2 L1348.4 631.1 L1357.9 634.5 L1356.8 644.4 L1357.7 655.8ZM1368.6 617.9 L1361.9 612.8 L1351.3 608.2 L1346.9 619.7 L1341.1 626.3 L1342.9 630.2 L1348.4 631.1 L1357.9 634.5 L1368.0 626.7ZM1103.1 683.0 L1102.7 676.6 L1103.2 676.9 L1108.2 675.8 L1112.1 679.9 L1106.1 683.5ZM1082.2 735.3 L1086.3 729.8 L1094.1 727.6 L1094.9 726.3 L1096.8 736.2 L1090.9 740.5 L1084.2 737.0ZM1234.4 628.2 L1214.8 628.7 L1214.3 638.0 L1221.7 644.1 L1231.4 649.3 L1230.4 660.5 L1239.5 666.7 L1246.8 671.3 L1252.4 663.6 L1259.2 655.8 L1255.3 644.6 L1252.7 639.8 L1241.0 643.6ZM998.4 765.8 L1002.6 769.6 L1012.1 775.3 L1014.6 779.8 L1014.7 789.8 L1022.4 787.7 L1025.4 787.7 L1035.6 768.4 L1023.0 762.0 L1020.0 753.8 L1018.7 748.9 L1014.5 749.0 L1005.1 753.1 L996.3 761.1ZM1390.2 631.0 L1384.8 637.4 L1368.0 626.7 L1357.9 634.5 L1356.8 644.4 L1357.7 655.8 L1352.5 656.7 L1343.9 668.4 L1348.5 673.9 L1352.4 681.2 L1366.0 683.7 L1374.2 666.8 L1381.8 671.5 L1392.1 679.2 L1401.1 672.8 L1407.2 667.5 L1404.2 650.4 L1413.7 643.3 L1409.4 637.8 L1407.5 628.9 L1396.3 626.1ZM996.1 283.7 L983.9 289.9 L984.0 297.5 L983.2 305.5 L994.3 311.0 L1012.2 294.6 L1000.3 288.2ZM1108.2 728.7 L1108.3 721.6 L1104.2 717.0 L1102.4 718.4 L1097.7 726.9 L1094.9 726.3 L1096.8 736.2 L1103.1 738.6 L1106.2 730.0ZM1120.9 656.0 L1108.9 656.5 L1109.7 668.0 L1112.0 669.8 L1108.2 675.8 L1112.1 679.9 L1115.9 682.8 L1120.0 678.8 L1121.9 667.5 L1125.6 667.2ZM1252.3 844.9 L1252.0 840.8 L1248.4 833.8 L1226.5 834.3 L1224.4 837.4 L1223.7 850.1 L1239.8 854.1ZM1060.3 710.6 L1063.0 715.4 L1067.5 715.7 L1071.0 709.9 L1070.2 709.0 L1066.3 706.5 L1061.5 709.9ZM1128.8 609.5 L1113.1 600.6 L1106.5 612.6 L1094.7 615.9 L1086.5 621.2 L1095.8 629.7 L1099.6 637.5 L1103.7 635.1 L1108.2 641.6 L1121.2 642.9 L1124.8 631.8 L1120.1 624.8ZM1062.8 688.3 L1062.9 687.9 L1055.7 691.0 L1054.3 690.9 L1053.0 686.4 L1061.4 681.6 L1061.5 681.2ZM1196.3 614.6 L1206.9 615.8 L1212.8 603.2 L1209.4 593.8 L1200.8 584.1 L1192.3 584.5 L1187.8 592.7 L1184.9 597.6 L1184.5 603.2 L1189.9 614.2 L1183.3 617.7 L1169.0 618.9 L1165.5 628.4 L1162.0 632.7 L1180.5 644.8 L1178.8 650.0 L1190.1 670.2 L1191.2 670.5 L1196.6 666.9 L1201.9 658.6 L1206.6 647.5 L1185.9 640.3 L1187.4 631.8 L1191.3 616.2ZM1080.3 701.9 L1083.4 705.7 L1087.1 702.2 L1085.8 699.4 L1082.7 698.7ZM1331.5 536.6 L1323.2 542.7 L1321.0 545.2 L1328.7 552.3 L1337.6 569.0 L1344.5 563.6 L1350.9 555.1 L1349.2 548.4 L1342.4 538.7ZM725.3 802.4 L721.9 814.4 L721.9 830.9 L719.9 834.7 L740.7 834.1 L742.1 844.2 L745.8 850.2 L763.9 848.7 L769.7 834.7 L767.4 827.7 L753.0 829.2 L746.6 827.8 L747.1 804.7ZM851.8 840.0 L845.5 821.8 L854.3 813.8 L862.4 810.3 L860.7 813.3 L871.3 833.3 L870.1 833.3 L864.9 837.6ZM870.1 833.3 L871.3 833.3 L880.7 833.0 L889.3 836.7 L896.3 842.0 L891.4 849.8 L890.0 856.1 L878.9 853.7 L871.2 853.9ZM1031.2 595.4 L1035.0 588.2 L1041.8 579.5 L1041.9 566.8 L1030.6 565.9 L1022.7 574.8 L1014.2 583.9 L1027.7 594.3ZM1027.7 594.3 L1014.2 583.9 L1012.7 585.3 L1001.0 590.9 L1001.4 598.4 L998.4 605.9 L1014.5 614.2 L1017.3 609.0 L1020.1 603.0ZM1050.1 603.8 L1046.3 603.7 L1031.2 595.4 L1035.0 588.2 L1041.8 579.5 L1053.6 579.9 L1055.0 587.5 L1057.4 593.8ZM1292.3 756.8 L1283.5 760.1 L1282.6 773.0 L1279.9 776.3 L1274.8 788.7 L1271.6 794.8 L1279.9 804.6 L1285.1 802.5 L1294.9 801.6 L1298.7 790.7 L1298.9 784.8 L1301.2 781.5 L1309.4 773.9 L1305.2 758.7 L1303.2 750.0ZM1246.0 871.9 L1252.6 883.6 L1257.2 883.8 L1267.0 884.0 L1272.0 866.6 L1269.0 863.2 L1258.5 862.6 L1252.5 868.9ZM1102.4 694.6 L1105.3 692.9 L1110.3 699.3 L1106.3 703.2 L1101.2 700.3 L1101.4 695.7ZM770.8 768.8 L760.2 765.1 L746.8 766.2 L741.1 775.8 L732.7 777.1 L723.1 778.4 L725.1 793.1 L725.7 801.2 L725.3 802.4 L747.1 804.7 L755.8 798.4 L751.6 797.3 L774.3 780.9 L771.9 765.8ZM1032.9 695.7 L1043.0 694.1 L1043.8 684.8 L1039.6 679.9 L1031.1 687.2 L1031.1 693.5ZM821.7 684.8 L821.1 681.6 L810.6 681.1 L804.9 678.5 L800.3 681.1 L793.1 686.8 L784.2 681.0 L774.5 685.0 L770.8 687.8 L781.3 706.9 L787.6 705.9 L797.7 705.0 L800.2 705.5 L801.3 713.0 L816.5 729.7 L823.0 726.2 L829.2 719.5 L831.3 712.7 L816.6 698.2ZM1534.8 439.1 L1535.5 432.1 L1529.2 426.8 L1520.7 411.9 L1512.7 413.2 L1505.2 424.0 L1492.5 423.2 L1483.8 429.7 L1480.5 434.9 L1479.4 438.5 L1496.6 448.3 L1509.1 438.4 L1523.0 447.3ZM766.8 805.6 L775.1 810.4 L777.6 811.3 L789.8 823.5 L809.7 815.7 L807.6 802.9 L794.7 795.1 L784.1 799.1 L777.8 791.9 L774.3 780.9 L751.6 797.3 L755.8 798.4ZM1234.0 279.2 L1228.0 297.3 L1230.0 300.7 L1227.6 307.7 L1229.3 320.1 L1245.7 324.7 L1252.4 315.2 L1259.9 314.0 L1270.8 314.8 L1275.3 304.8 L1277.4 300.6 L1262.0 288.1 L1263.1 279.4 L1251.7 271.8ZM1231.6 719.0 L1232.7 722.4 L1240.9 725.0 L1256.9 723.8 L1259.9 713.4 L1256.3 704.5 L1240.4 704.3 L1236.5 708.2ZM840.4 907.9 L844.9 911.2 L856.5 914.6 L863.5 913.1 L863.3 905.5 L868.4 895.1 L854.1 891.3 L847.2 887.6 L841.3 890.3 L841.8 899.4ZM841.3 890.3 L847.2 887.6 L863.0 866.0 L859.3 864.9 L854.1 862.9 L847.8 855.2 L832.1 873.0 L828.7 877.8 L831.0 883.2ZM873.5 930.3 L854.1 931.8 L856.7 924.7 L856.5 914.6 L863.5 913.1 L882.7 920.2ZM1282.6 773.0 L1283.5 760.1 L1281.5 756.1 L1273.7 749.7 L1255.6 756.3 L1259.0 763.6 L1265.6 771.8 L1262.3 777.6 L1253.8 783.8 L1257.8 788.5 L1261.4 795.7 L1271.6 794.8 L1274.8 788.7 L1279.9 776.3ZM1061.5 681.2 L1061.4 681.6 L1060.6 680.5 L1061.5 673.3 L1065.3 672.8 L1068.7 679.5ZM1579.1 727.4 L1567.9 732.3 L1570.2 737.3 L1570.7 747.7 L1584.9 745.1 L1593.9 745.1 L1591.3 774.9 L1595.6 774.1 L1607.3 771.7 L1618.6 763.6 L1611.3 752.3 L1608.3 744.7 L1596.4 747.5 L1596.6 733.7 L1592.4 721.6ZM1079.3 680.5 L1074.2 676.4 L1074.9 675.2 L1082.0 671.6 L1083.4 672.1 L1082.0 678.2ZM1138.9 721.1 L1144.5 731.7 L1155.8 730.6 L1158.1 730.0 L1160.9 725.3 L1161.1 716.1 L1151.9 712.4 L1143.9 716.4ZM1286.8 537.9 L1278.7 554.1 L1268.3 549.1 L1258.5 545.7 L1256.3 542.8 L1272.2 536.9 L1281.1 529.0ZM1255.2 534.0 L1256.3 542.8 L1258.5 545.7 L1251.4 550.4 L1229.5 553.2 L1230.5 553.0 L1227.5 542.3 L1225.7 536.1 L1234.2 527.5 L1240.8 531.1ZM1141.7 978.3 L1140.8 959.2 L1148.5 955.8 L1153.5 954.2 L1163.7 954.4 L1166.5 964.2 L1171.6 970.8 L1169.0 977.4 L1161.4 979.7 L1153.3 985.9ZM1019.3 265.0 L1025.7 270.2 L1023.9 285.3 L1021.8 293.0 L1021.0 296.8 L1012.2 294.6 L1000.3 288.2 L996.1 283.7 L995.9 275.4 L1005.8 266.1ZM1026.5 245.9 L1019.3 265.0 L1005.8 266.1 L999.0 255.1 L997.9 249.5 L1017.7 239.9 L1023.6 243.3ZM827.0 197.5 L822.0 182.9 L811.0 183.5 L804.0 181.8 L806.1 192.2 L804.6 197.2 L816.2 208.9 L821.9 205.7 L828.9 226.8 L843.6 216.0 L839.5 205.3 L826.1 205.3ZM1071.4 669.6 L1074.9 675.2 L1074.2 676.4 L1070.1 679.6 L1068.7 679.5 L1065.3 672.8 L1066.4 670.5ZM1031.1 687.2 L1023.4 679.5 L1015.4 686.1 L1008.1 684.2 L999.7 694.0 L998.1 696.5 L1016.4 704.7 L1019.8 696.4 L1031.1 693.5ZM1085.4 686.8 L1090.3 687.9 L1091.8 687.1 L1091.5 685.2 L1088.0 679.8 L1085.9 680.0 L1084.9 685.2ZM1013.5 357.1 L1010.9 365.2 L1022.3 374.9 L1017.7 386.5 L1027.6 387.5 L1035.8 391.7 L1046.3 375.4 L1046.5 373.3 L1036.0 370.5 L1036.1 362.7 L1030.5 348.5 L1022.5 347.0 L1019.7 344.9ZM973.2 645.7 L976.1 635.8 L993.0 629.8 L1002.7 634.1 L999.2 650.8 L996.7 654.3ZM992.3 667.2 L996.7 654.3 L973.2 645.7 L969.4 653.5 L970.8 665.3 L980.6 670.1 L987.6 670.7ZM1113.7 699.2 L1117.1 692.3 L1115.8 691.0 L1108.0 689.0 L1105.3 692.9 L1110.3 699.3ZM1348.7 864.3 L1334.7 881.0 L1326.8 876.6 L1318.3 872.6 L1322.0 865.9 L1326.9 860.5ZM775.1 896.4 L793.5 909.5 L809.0 890.5 L802.6 880.4 L785.7 880.4ZM1084.6 642.8 L1080.1 635.8 L1076.7 630.5 L1073.5 632.6 L1071.3 645.1 L1065.0 645.0 L1062.8 653.4 L1064.4 657.0 L1064.5 661.6 L1073.2 661.8 L1075.5 654.1 L1075.7 652.0 L1075.7 647.4ZM796.1 223.3 L789.9 234.4 L798.8 239.2 L802.9 241.9 L798.8 256.3 L808.6 262.6 L824.8 251.8 L825.5 252.1 L828.7 245.9 L834.0 237.6 L829.3 227.5 L815.0 230.4 L805.3 222.5ZM1087.1 719.1 L1092.6 719.4 L1095.5 715.9 L1091.2 710.5 L1086.2 716.0ZM1093.0 651.3 L1092.7 650.6 L1091.9 642.6 L1084.6 642.8 L1075.7 647.4 L1075.7 652.0 L1083.0 655.1ZM1352.2 826.0 L1356.2 833.4 L1376.7 837.5 L1382.7 824.4 L1375.1 814.5 L1370.1 806.6 L1363.8 808.3 L1355.1 813.0ZM1072.5 701.8 L1073.5 705.0 L1076.1 704.5 L1078.3 702.2 L1076.8 699.2 L1073.7 698.7ZM928.5 831.3 L919.1 831.1 L909.9 834.1 L906.3 838.0 L908.0 843.9 L915.8 852.0 L926.6 856.9 L932.5 857.4 L936.4 863.9 L944.3 869.8 L954.0 869.8 L962.5 887.1 L970.4 886.3 L981.1 888.3 L981.4 880.2 L980.9 873.2 L966.9 864.8 L967.6 851.1 L960.3 849.4 L946.4 844.0 L941.6 847.8ZM1087.1 702.2 L1091.5 703.5 L1092.3 700.9 L1092.9 699.8 L1088.1 696.6 L1085.8 699.4ZM869.8 722.8 L867.7 735.0 L871.6 741.5 L878.0 752.8 L886.1 751.2 L894.4 745.1 L900.0 733.4 L892.0 721.5 L897.5 712.7 L883.3 703.4 L874.2 697.0 L864.0 717.6ZM1140.8 289.9 L1136.7 282.8 L1135.8 269.0 L1122.2 270.0 L1118.4 273.0 L1117.5 283.5 L1120.1 293.9 L1128.7 291.5 L1138.6 291.6ZM998.9 863.6 L987.7 867.8 L980.9 873.2 L966.9 864.8 L967.6 851.1 L974.7 842.3 L979.9 840.1 L984.9 845.2 L993.0 852.7ZM1145.4 692.4 L1154.3 700.1 L1168.0 699.7 L1172.6 693.8 L1163.0 678.2 L1146.3 687.1ZM1172.6 693.8 L1181.9 684.4 L1183.5 673.4 L1177.7 674.9 L1166.6 673.8 L1163.1 676.5 L1163.0 678.2ZM1176.7 710.4 L1169.2 712.6 L1161.1 716.1 L1160.9 725.3 L1158.1 730.0 L1170.9 730.3 L1177.6 719.2 L1177.4 710.3ZM1079.2 682.2 L1078.6 682.0 L1073.1 683.2 L1073.4 686.7 L1078.9 689.0 L1078.7 688.8ZM1056.0 703.6 L1062.1 700.2 L1065.4 702.6 L1066.3 706.5 L1061.5 709.9ZM1176.7 710.4 L1168.0 699.7 L1172.6 693.8 L1181.9 684.4 L1196.9 697.9 L1195.5 703.8 L1183.8 707.7 L1177.4 710.3ZM1177.4 710.3 L1183.8 707.7 L1195.5 703.8 L1204.7 712.4 L1202.6 719.5 L1199.7 728.7 L1196.4 728.2 L1185.6 725.5 L1177.6 719.2ZM1078.4 721.3 L1078.5 721.4 L1074.8 718.6 L1071.9 718.2 L1068.3 723.8 L1074.0 727.5ZM1150.7 879.7 L1159.4 873.7 L1174.5 887.3 L1176.1 889.4 L1176.7 894.7 L1158.1 899.4 L1151.4 904.7 L1144.1 893.8 L1148.6 885.2ZM1161.7 858.4 L1162.0 867.0 L1159.4 873.7 L1150.7 879.7 L1145.9 874.4 L1136.0 866.5 L1135.9 860.7 L1145.1 858.9 L1159.3 854.2 L1164.8 852.8ZM1032.9 884.0 L1013.0 874.2 L1009.8 879.4 L1005.8 889.9 L1008.3 896.2 L1015.0 905.1 L1013.9 910.2 L1023.8 917.2 L1032.2 921.4 L1036.0 912.2 L1041.5 907.8 L1035.9 898.9 L1031.5 894.9ZM1306.2 518.6 L1326.3 514.2 L1324.2 514.5 L1327.8 505.7 L1329.7 493.6 L1320.9 490.6 L1299.8 489.1 L1303.5 491.1 L1299.6 510.9ZM1277.9 513.7 L1274.4 506.6 L1274.6 492.4 L1303.5 491.1 L1299.6 510.9 L1288.3 509.8ZM1325.9 472.1 L1312.2 462.0 L1306.9 472.0 L1302.0 476.6 L1299.8 489.1 L1320.9 490.6 L1329.7 493.6 L1331.3 487.2 L1341.9 495.5 L1355.0 498.4 L1355.6 499.7 L1361.3 497.3 L1374.7 498.0 L1378.1 491.0 L1383.3 484.9 L1380.4 481.0 L1357.2 480.1 L1352.8 472.8 L1345.4 471.6 L1334.2 476.9ZM1108.1 708.7 L1114.6 710.0 L1117.3 705.6 L1113.7 699.2 L1110.3 699.3 L1106.3 703.2ZM1107.3 974.5 L1116.6 973.7 L1119.1 963.8 L1121.1 953.1 L1121.7 949.7 L1107.2 947.0 L1099.6 949.0 L1095.6 964.3 L1099.7 974.3ZM1107.3 974.5 L1102.5 995.6 L1102.6 1005.9 L1096.9 1004.0 L1086.3 997.1 L1079.8 985.9 L1087.0 981.1 L1099.7 974.3ZM964.6 344.5 L967.6 345.5 L967.2 357.8 L960.0 364.8 L955.5 368.5 L951.9 365.0 L942.9 362.1 L939.7 350.5 L955.2 347.9ZM967.6 345.5 L980.1 338.7 L987.4 343.5 L993.8 347.8 L992.7 354.7 L992.2 363.5 L981.8 368.8 L974.0 363.6 L967.2 357.8ZM956.9 382.1 L955.5 368.5 L960.0 364.8 L967.2 357.8 L974.0 363.6 L981.8 368.8 L980.1 374.4 L977.5 382.4ZM767.4 827.7 L769.7 834.7 L779.8 835.2 L790.2 837.7 L789.8 823.5 L777.6 811.3 L775.1 810.4ZM1218.5 935.5 L1199.3 939.5 L1201.6 946.5 L1200.8 956.2 L1215.1 960.4 L1223.3 956.7 L1227.3 952.7 L1226.6 947.0 L1221.8 940.9ZM1114.6 710.0 L1117.1 717.2 L1123.7 719.5 L1130.7 710.1 L1131.9 704.2 L1126.9 704.3 L1117.3 705.6ZM1108.1 708.7 L1106.2 711.4 L1104.2 717.0 L1108.3 721.6 L1117.1 717.2 L1114.6 710.0ZM1056.6 694.9 L1061.1 697.4 L1066.1 693.8 L1062.9 687.9 L1055.7 691.0ZM1229.6 390.2 L1206.8 398.6 L1207.9 404.8 L1208.2 416.0 L1215.5 417.8 L1224.9 416.2 L1229.1 413.1 L1229.2 416.0 L1238.5 418.0 L1252.7 421.1 L1254.7 414.1 L1257.2 405.3 L1253.3 397.0 L1242.2 395.3 L1235.6 396.7ZM1061.4 681.6 L1053.0 686.4 L1050.2 683.7 L1050.7 676.6 L1060.6 680.5ZM1082.2 735.3 L1074.8 732.1 L1069.7 736.8 L1069.8 743.7 L1076.4 748.8 L1079.0 742.6 L1084.2 737.0ZM1363.1 923.7 L1370.3 907.9 L1373.1 904.6 L1359.8 895.7 L1349.9 898.4 L1343.8 909.2 L1335.5 910.7 L1327.6 910.7 L1323.6 924.2 L1325.6 931.6 L1330.1 933.4 L1344.6 932.7 L1353.0 929.3 L1350.8 926.0ZM1062.2 266.7 L1063.6 281.4 L1064.5 286.2 L1082.6 282.7 L1083.9 276.7 L1084.4 267.9 L1077.9 257.5ZM1320.9 733.3 L1315.4 725.2 L1308.5 715.8 L1313.7 710.7 L1326.6 700.2 L1328.7 700.9 L1335.6 721.8 L1327.9 730.2ZM1256.1 570.0 L1254.7 557.9 L1251.4 550.4 L1258.5 545.7 L1268.3 549.1 L1278.7 554.1 L1280.0 562.6 L1275.5 572.0 L1268.5 579.0 L1261.9 573.7ZM1245.6 575.3 L1235.7 572.2 L1230.7 568.3 L1229.5 553.2 L1251.4 550.4 L1254.7 557.9 L1256.1 570.0ZM1017.3 609.0 L1014.5 614.2 L1009.2 634.4 L1021.9 636.2 L1027.4 634.2 L1030.8 625.4 L1030.9 619.5ZM1046.3 603.7 L1031.2 595.4 L1027.7 594.3 L1020.1 603.0 L1017.3 609.0 L1030.9 619.5 L1037.8 617.0ZM806.5 893.3 L809.0 890.5 L793.5 909.5 L790.6 913.8 L800.7 922.1 L807.3 925.9 L819.6 908.1ZM1155.6 234.4 L1148.3 240.9 L1138.9 248.3 L1148.3 263.1 L1135.8 269.0 L1136.7 282.8 L1140.8 289.9 L1155.7 287.6 L1163.2 286.4 L1162.8 281.3 L1172.9 282.5 L1177.7 280.7 L1188.6 279.1 L1180.5 265.2 L1175.0 255.9 L1168.8 254.1ZM1444.5 415.8 L1452.6 408.3 L1460.3 397.6 L1452.5 384.1 L1441.7 386.3 L1434.3 389.0 L1429.6 403.6 L1438.8 412.2ZM1108.2 675.8 L1112.0 669.8 L1109.7 668.0 L1099.7 669.1 L1103.2 676.9ZM778.3 723.1 L774.6 716.2 L761.1 716.0 L760.8 727.1 L760.4 737.5 L761.0 740.4 L770.8 768.8 L771.9 765.8 L781.2 766.2 L787.3 758.0 L786.7 750.9 L781.8 739.4 L783.8 729.9ZM1080.3 701.9 L1083.4 705.7 L1083.8 707.9 L1077.6 708.4 L1076.1 704.5 L1078.3 702.2ZM1112.6 515.3 L1118.0 502.8 L1101.2 489.5 L1095.4 499.6 L1090.1 504.1 L1085.4 501.9 L1077.2 507.8 L1072.9 515.3 L1072.7 531.8 L1080.1 532.7 L1091.1 540.7 L1103.8 528.6 L1104.6 522.1ZM1093.0 651.3 L1083.0 655.1 L1083.0 661.8 L1087.5 666.0 L1093.5 660.4ZM1043.8 684.8 L1050.2 683.7 L1053.0 686.4 L1054.3 690.9 L1045.6 693.7 L1043.0 694.1ZM756.2 926.3 L758.0 924.9 L751.0 922.9 L741.9 929.0 L731.7 931.5 L730.5 942.0 L738.5 948.4 L729.9 965.3 L737.7 969.9 L746.4 976.6 L756.0 973.1 L755.3 961.3 L752.8 954.0 L747.4 949.0ZM1035.8 391.7 L1027.6 387.5 L1017.7 386.5 L1010.2 392.9 L1003.1 395.4 L1002.6 399.8 L992.1 420.5 L981.5 414.1 L969.1 409.3 L963.6 411.3 L957.1 411.9 L960.1 434.7 L971.9 435.0 L980.7 438.7 L990.8 433.1 L995.5 433.7 L1012.9 433.8 L1015.3 437.1 L1036.1 435.9 L1038.6 427.3 L1035.2 421.1 L1035.1 408.0 L1038.0 403.3ZM1082.7 698.7 L1085.8 699.4 L1088.1 696.6 L1088.0 694.8 L1084.4 693.2 L1080.8 694.7ZM1206.8 801.1 L1195.7 807.0 L1192.3 805.6 L1187.1 808.2 L1181.0 815.6 L1188.5 831.7 L1205.8 826.0 L1205.3 824.5 L1211.8 819.5 L1218.9 815.9 L1220.1 805.0 L1219.6 794.6 L1215.3 795.4ZM1243.8 255.2 L1228.6 255.4 L1221.8 265.7 L1234.0 279.2 L1251.7 271.8 L1248.1 264.4ZM1046.9 257.7 L1026.5 245.9 L1023.6 243.3 L1030.3 238.4 L1040.1 229.4 L1049.7 230.9 L1056.5 235.5 L1055.4 246.6ZM1033.1 924.8 L1037.7 930.7 L1044.1 938.9 L1037.3 946.9 L1036.2 952.5 L1025.5 952.5 L1025.6 946.5 L1022.1 936.6ZM1123.3 667.6 L1129.7 664.4 L1138.3 657.1 L1147.6 663.8 L1146.1 662.5 L1138.4 675.8 L1132.4 678.0ZM1100.3 702.1 L1101.2 700.3 L1106.3 703.2 L1108.1 708.7 L1106.2 711.4 L1098.8 709.5 L1097.9 705.5ZM1056.0 703.6 L1062.1 700.2 L1061.1 697.4 L1056.6 694.9 L1051.5 700.6 L1054.2 703.9ZM1096.9 682.7 L1100.0 685.0 L1099.5 688.2 L1095.4 689.2 L1091.8 687.1 L1091.5 685.2ZM892.7 316.0 L892.7 336.8 L897.2 341.0 L905.5 337.4 L917.5 335.2 L916.4 318.9 L899.5 308.7ZM1224.8 873.2 L1237.4 870.1 L1239.7 859.5 L1239.8 854.1 L1223.7 850.1 L1217.0 859.0 L1217.1 860.8 L1219.4 866.9ZM1139.2 424.7 L1134.8 434.4 L1135.8 447.3 L1140.3 448.5 L1148.5 455.1 L1157.9 445.6 L1153.7 439.1 L1152.4 431.5 L1144.4 427.6ZM1080.9 713.9 L1078.5 721.4 L1074.8 718.6 L1074.2 711.7 L1077.5 710.6ZM1182.3 380.1 L1173.3 376.5 L1169.3 377.3 L1165.9 384.9 L1163.3 403.0 L1166.1 411.0 L1168.8 417.0 L1172.5 423.0 L1177.2 428.6 L1188.5 433.8 L1197.6 415.6 L1208.2 416.0 L1207.9 404.8 L1206.8 398.6 L1203.7 394.7 L1188.8 394.3ZM946.8 899.6 L943.8 893.0 L940.0 887.0 L943.0 876.3 L944.3 869.8 L954.0 869.8 L962.5 887.1 L954.7 898.5ZM881.6 672.0 L865.9 666.9 L860.8 676.5 L857.2 682.3 L856.1 681.4 L871.1 696.9 L878.7 691.3 L887.3 685.7 L885.6 679.5ZM1097.3 870.0 L1089.2 873.7 L1081.5 877.7 L1075.2 874.6 L1065.5 870.5 L1066.5 868.3 L1074.2 849.5 L1087.4 850.0 L1089.6 857.7ZM1054.3 713.3 L1060.3 710.6 L1061.5 709.9 L1056.0 703.6 L1054.2 703.9 L1050.3 710.5ZM1302.4 819.6 L1306.5 810.7 L1294.9 801.6 L1285.1 802.5 L1279.9 804.6 L1273.7 815.4 L1281.1 821.9 L1284.8 824.3 L1298.5 824.3ZM1273.7 815.4 L1265.6 818.2 L1256.4 808.1 L1261.4 795.7 L1271.6 794.8 L1279.9 804.6ZM1152.6 352.8 L1166.4 346.0 L1176.8 363.6 L1173.3 376.5 L1169.3 377.3 L1159.4 373.9 L1154.1 373.2 L1150.9 367.1ZM1020.9 728.4 L1010.1 728.8 L1006.7 736.7 L1010.7 744.0 L1014.5 749.0 L1018.7 748.9 L1023.9 736.8ZM946.0 733.5 L948.7 726.8 L954.3 723.7 L961.3 720.6 L969.8 729.8 L968.4 740.4 L959.8 748.3 L954.5 741.8ZM937.6 970.7 L932.6 972.5 L922.7 972.0 L920.6 970.7 L916.0 963.1 L912.8 952.5 L914.4 948.5 L942.2 940.8 L939.5 943.9 L941.2 959.6ZM937.6 970.7 L941.2 959.6 L939.5 943.9 L961.4 949.0 L965.1 960.2 L955.5 970.0 L942.5 971.5ZM937.6 970.7 L932.6 972.5 L922.7 972.0 L921.8 982.6 L922.3 991.0 L929.7 1001.4 L941.7 996.1 L940.6 985.8 L942.5 971.5ZM1207.1 1001.9 L1213.1 1004.9 L1223.3 1007.7 L1226.1 1001.4 L1236.3 993.2 L1232.1 981.8 L1222.6 980.4 L1214.2 980.1 L1208.0 987.5ZM1106.3 780.3 L1114.8 782.9 L1123.3 783.9 L1127.2 794.9 L1134.3 791.1 L1143.0 789.4 L1145.9 785.7 L1148.8 776.6 L1147.5 772.4 L1125.8 775.0 L1124.4 768.8 L1125.2 757.9 L1116.1 754.0 L1112.9 761.5 L1106.2 769.3ZM843.6 216.0 L839.5 205.3 L842.8 198.1 L848.3 192.2 L855.1 192.7 L860.6 202.1 L848.8 219.0ZM1084.6 688.0 L1078.7 688.8 L1079.2 682.2 L1084.9 685.2 L1085.4 686.8ZM1290.0 652.9 L1278.1 647.3 L1278.3 628.1 L1285.3 629.3 L1297.6 631.2 L1296.1 641.9 L1295.9 647.5ZM1073.2 661.8 L1075.6 665.0 L1078.0 665.9 L1083.0 661.8 L1083.0 655.1 L1075.7 652.0 L1075.5 654.1ZM1089.7 676.0 L1085.6 671.8 L1088.6 665.6 L1095.9 669.5 L1093.6 675.1ZM863.0 866.0 L867.3 871.5 L878.3 878.3 L872.2 893.1 L868.4 895.1 L854.1 891.3 L847.2 887.6ZM1063.3 426.9 L1038.6 427.3 L1035.2 421.1 L1035.1 408.0 L1038.0 403.3 L1053.3 406.5 L1060.6 406.2 L1060.9 418.2 L1061.4 424.0ZM1054.3 713.3 L1052.5 721.5 L1041.4 716.1 L1045.5 710.1 L1050.3 710.5ZM1068.9 696.2 L1072.4 696.7 L1074.3 693.1 L1072.0 690.7 L1067.0 694.2ZM1046.0 664.5 L1044.4 664.0 L1037.8 671.3 L1039.3 675.8 L1052.0 675.8 L1053.5 668.8ZM1039.6 679.9 L1039.3 675.8 L1052.0 675.8 L1050.7 676.6 L1050.2 683.7 L1043.8 684.8ZM1074.2 377.1 L1067.8 378.1 L1055.9 378.9 L1059.1 401.6 L1060.6 406.2 L1060.9 418.2 L1061.4 424.0 L1070.9 427.3 L1078.1 428.0 L1081.2 414.9 L1087.5 403.5 L1078.9 396.8 L1078.7 388.6 L1075.1 381.8ZM1087.1 719.1 L1083.1 722.7 L1078.4 721.3 L1078.5 721.4 L1080.9 713.9 L1082.5 713.4 L1086.2 716.0ZM1172.9 282.5 L1162.8 281.3 L1163.2 286.4 L1164.5 302.1 L1152.1 307.6 L1157.0 318.6 L1159.8 325.0 L1180.5 315.9 L1180.4 304.7 L1180.5 301.4 L1179.3 292.9 L1177.7 280.7ZM1232.8 463.7 L1231.7 453.4 L1232.9 442.4 L1224.3 443.6 L1210.2 441.5 L1205.5 441.0 L1210.4 452.7 L1211.4 459.4 L1233.6 464.4ZM1291.7 869.8 L1292.0 877.7 L1289.4 883.6 L1273.3 887.9 L1267.0 884.0 L1272.0 866.6 L1281.3 867.3 L1288.5 867.4ZM1313.9 872.1 L1311.9 872.4 L1291.7 869.8 L1292.0 877.7 L1289.4 883.6 L1294.5 888.9 L1296.9 895.9 L1307.0 894.9ZM896.1 783.5 L889.8 772.5 L876.8 772.5 L874.0 780.8 L863.6 785.7 L856.5 789.8 L862.4 810.3 L860.7 813.3 L873.7 814.1 L882.9 810.8 L885.3 797.8 L896.7 793.7 L903.4 790.4ZM735.0 720.1 L741.2 713.4 L745.7 707.8 L752.2 704.0 L761.1 716.0 L760.8 727.1 L760.4 737.5 L761.0 740.4 L749.2 740.9 L741.9 742.0 L737.8 726.9ZM1235.8 959.6 L1244.0 956.9 L1254.0 956.1 L1260.9 963.5 L1258.5 969.5 L1259.6 979.9 L1248.5 981.5 L1235.4 977.9ZM1089.7 693.1 L1095.2 693.7 L1095.4 689.2 L1091.8 687.1 L1090.3 687.9ZM1037.8 671.3 L1044.4 664.0 L1037.0 657.1 L1032.6 654.8 L1032.1 653.9 L1023.4 668.0 L1025.7 670.5ZM1098.5 823.1 L1113.3 832.3 L1114.4 839.0 L1112.0 847.2 L1115.3 847.6 L1093.1 846.8 L1091.4 826.1ZM1005.8 266.1 L995.9 275.4 L989.1 271.7 L978.1 258.5 L984.1 248.9 L997.9 249.5 L999.0 255.1ZM1200.8 354.3 L1205.1 352.0 L1213.0 345.3 L1210.8 343.4 L1204.7 331.9 L1203.2 323.6 L1189.5 326.7 L1187.0 336.5 L1170.1 341.5 L1166.4 346.0 L1176.8 363.6 L1184.7 358.9 L1196.5 354.0ZM1063.6 664.1 L1060.3 663.6 L1054.7 669.3 L1061.5 673.3 L1065.3 672.8 L1066.4 670.5ZM1368.6 617.9 L1361.9 612.8 L1351.3 608.2 L1346.4 599.1 L1345.3 598.5 L1355.7 593.2 L1362.9 596.4 L1368.8 599.8 L1373.1 608.5ZM1078.0 665.9 L1083.0 661.8 L1087.5 666.0 L1088.6 665.6 L1085.6 671.8 L1083.4 672.1 L1082.0 671.6ZM1050.1 603.8 L1046.3 603.7 L1037.8 617.0 L1048.2 624.4 L1057.8 619.1ZM960.1 1001.8 L961.6 992.0 L965.6 985.9 L987.4 983.7 L993.3 990.5 L985.8 1006.4 L976.4 1006.2 L961.7 1007.7ZM1084.6 688.0 L1084.4 693.2 L1088.0 694.8 L1089.7 693.1 L1090.3 687.9 L1085.4 686.8ZM936.8 508.0 L956.4 508.5 L962.5 519.0 L955.4 530.3 L954.7 536.2 L939.5 534.8 L935.0 531.4 L934.0 523.5ZM780.7 240.5 L772.4 220.7 L782.7 214.2 L791.2 211.3 L796.1 223.3 L789.9 234.4ZM1394.6 692.9 L1395.5 695.0 L1397.4 714.1 L1377.6 714.0 L1373.5 709.3 L1369.2 699.9 L1371.4 698.9 L1379.4 698.8ZM991.4 814.0 L977.5 807.6 L972.9 804.7 L985.8 795.8 L990.2 787.8 L1000.8 795.5 L1002.9 808.5ZM828.7 877.8 L832.1 873.0 L827.1 866.4 L816.2 861.2 L817.6 862.3 L804.4 870.1 L802.6 880.4 L809.0 890.5 L806.5 893.3 L813.9 888.9ZM1063.3 718.2 L1063.0 715.4 L1060.3 710.6 L1054.3 713.3 L1052.5 721.5 L1054.6 722.0ZM823.4 832.4 L825.6 837.9 L831.0 848.9 L826.6 852.9 L816.2 861.2 L817.6 862.3 L804.2 843.5 L817.8 827.4ZM1074.3 693.1 L1077.6 693.1 L1078.9 689.0 L1073.4 686.7 L1071.9 689.2 L1072.0 690.7ZM1066.0 725.6 L1061.5 731.5 L1053.0 726.4 L1054.6 722.0 L1063.3 718.2ZM1077.6 708.4 L1076.1 704.5 L1073.5 705.0 L1070.2 709.0 L1071.0 709.9 L1074.2 711.7 L1077.5 710.6ZM1068.9 696.2 L1067.2 701.3 L1065.4 702.6 L1062.1 700.2 L1061.1 697.4 L1066.1 693.8 L1067.0 694.2ZM1045.1 284.8 L1040.4 293.5 L1034.6 293.2 L1021.8 293.0 L1023.9 285.3 L1025.7 270.2 L1035.3 270.5 L1041.6 268.9 L1044.1 274.1ZM1084.9 685.2 L1085.9 680.0 L1082.0 678.2 L1079.3 680.5 L1078.6 682.0 L1079.2 682.2ZM1309.6 674.2 L1324.1 675.7 L1333.1 670.4 L1332.9 663.8 L1330.6 649.7 L1318.4 646.1 L1310.0 653.9ZM1079.0 694.0 L1077.6 693.1 L1078.9 689.0 L1078.7 688.8 L1084.6 688.0 L1084.4 693.2 L1080.8 694.7ZM870.5 245.1 L869.3 232.6 L883.1 229.5 L889.3 226.4 L892.6 231.3 L901.7 239.4 L897.2 243.5 L888.3 249.6 L885.1 254.7 L876.3 246.5ZM1050.2 783.7 L1042.7 771.4 L1038.6 765.5 L1043.5 759.9 L1051.9 757.6 L1057.4 756.2 L1058.5 761.2 L1060.1 771.4 L1055.2 780.1ZM1073.4 686.7 L1071.9 689.2 L1067.8 687.2 L1070.4 681.4 L1073.1 683.2ZM1064.6 805.5 L1057.7 823.1 L1048.0 824.2 L1036.8 811.1 L1051.5 797.7 L1057.0 798.2ZM1072.5 701.8 L1073.5 705.0 L1070.2 709.0 L1066.3 706.5 L1065.4 702.6 L1067.2 701.3ZM1152.1 307.6 L1164.5 302.1 L1163.2 286.4 L1155.7 287.6 L1140.8 289.9 L1138.6 291.6 L1143.3 303.7ZM987.6 751.2 L994.2 738.2 L1006.7 736.7 L1010.7 744.0 L1014.5 749.0 L1005.1 753.1 L996.3 761.1 L986.1 750.8ZM1107.4 353.9 L1105.8 347.4 L1094.5 339.2 L1088.5 336.5 L1077.2 356.4 L1085.2 361.8 L1099.8 363.9ZM1105.4 870.8 L1106.2 874.1 L1107.2 887.7 L1108.6 894.0 L1103.3 898.2 L1101.0 909.1 L1106.0 917.3 L1110.3 922.5 L1114.6 916.4 L1122.1 906.5 L1119.3 897.6 L1123.1 892.3 L1128.6 886.7 L1129.4 881.6 L1128.2 872.6ZM806.2 748.4 L807.8 753.9 L829.7 748.9 L826.7 740.8 L823.0 726.2 L816.5 729.7 L810.8 732.6 L803.5 743.8ZM731.7 931.5 L724.9 922.2 L728.8 917.0 L730.2 909.0 L739.5 903.9 L744.7 908.9 L751.0 922.9 L741.9 929.0ZM1424.6 516.6 L1424.0 523.7 L1421.5 537.9 L1412.6 541.2 L1408.1 538.1 L1401.5 532.4 L1406.6 520.9 L1412.6 513.0ZM1204.0 889.6 L1208.6 891.9 L1217.6 884.9 L1225.7 880.3 L1235.6 895.3 L1230.5 904.0 L1216.7 903.1ZM1499.9 792.4 L1488.5 770.8 L1494.8 759.2 L1510.0 764.9 L1509.8 776.1 L1511.4 788.3 L1498.9 793.9ZM942.5 971.5 L940.6 985.8 L941.7 996.1 L949.4 997.5 L960.1 1001.8 L961.6 992.0 L965.6 985.9 L962.1 979.7 L955.5 970.0ZM1302.8 537.4 L1323.2 542.7 L1331.5 536.6 L1328.5 528.5 L1326.3 514.2 L1306.2 518.6ZM1092.8 755.5 L1100.8 763.1 L1106.2 769.3 L1106.3 780.3 L1103.0 782.4 L1092.7 777.1 L1079.9 772.9 L1081.3 760.6ZM1123.5 804.1 L1110.6 807.6 L1104.4 807.2 L1099.2 804.4 L1094.0 796.7 L1098.4 788.2 L1103.0 782.4 L1106.3 780.3 L1114.8 782.9 L1123.3 783.9 L1127.2 794.9ZM1112.1 925.8 L1117.4 930.7 L1125.0 935.1 L1136.5 930.3 L1138.4 925.2 L1139.3 913.5 L1122.1 906.5 L1114.6 916.4 L1110.3 922.5ZM1024.0 721.2 L1039.0 723.6 L1039.7 729.3 L1034.8 735.6 L1023.9 736.8 L1020.9 728.4ZM1104.4 374.6 L1113.1 379.2 L1124.8 386.0 L1119.7 402.2 L1109.0 403.0 L1097.3 402.4 L1095.5 400.5 L1100.3 390.6ZM952.1 699.3 L937.4 686.6 L930.1 693.6 L925.5 695.8 L927.1 701.4 L924.6 712.2 L935.9 712.8 L942.7 716.2 L946.0 710.8ZM1362.8 369.6 L1369.1 365.1 L1374.4 355.1 L1379.8 351.1 L1391.2 354.5 L1395.9 376.1 L1389.9 380.6 L1377.6 379.8ZM1374.7 406.2 L1378.9 392.4 L1377.6 379.8 L1362.8 369.6 L1361.4 374.8 L1353.5 376.6 L1352.8 394.3 L1353.4 402.1 L1357.0 408.4 L1362.6 408.6ZM1168.1 526.8 L1164.3 514.7 L1164.9 506.7 L1166.9 504.3 L1178.9 501.9 L1195.7 499.3 L1192.3 517.9 L1182.6 523.4 L1170.2 526.8ZM1168.1 526.8 L1158.4 526.9 L1140.5 534.4 L1141.2 538.3 L1152.1 545.5 L1158.6 556.4 L1161.9 553.8 L1175.4 541.0 L1173.2 536.0 L1170.2 526.8ZM811.4 970.7 L810.4 968.5 L795.2 957.1 L788.8 958.3 L777.9 967.6 L784.1 979.9 L789.7 985.0 L790.5 986.0 L798.9 986.1 L808.0 981.8ZM811.4 970.7 L828.7 972.5 L835.6 976.3 L831.2 992.4 L821.5 996.9 L813.2 996.7 L808.0 981.8ZM758.4 974.4 L762.3 984.7 L765.8 991.2 L767.3 995.9 L789.7 985.0 L784.1 979.9 L777.9 967.6 L779.4 967.2 L770.3 971.4ZM1092.9 699.8 L1094.4 694.7 L1095.2 693.7 L1089.7 693.1 L1088.0 694.8 L1088.1 696.6ZM1083.8 707.9 L1077.6 708.4 L1077.5 710.6 L1080.9 713.9 L1082.5 713.4 L1083.9 708.1ZM1074.3 693.1 L1077.6 693.1 L1079.0 694.0 L1076.8 699.2 L1073.7 698.7 L1072.4 696.7ZM875.8 945.5 L875.4 949.4 L884.6 968.2 L890.0 967.8 L896.9 962.6 L902.6 951.4 L896.4 941.8 L888.7 942.4ZM875.8 945.5 L888.7 942.4 L896.4 941.8 L896.4 929.2 L878.3 921.0 L882.7 920.2 L873.5 930.3 L874.9 936.7ZM1174.7 838.3 L1165.1 829.7 L1158.8 827.2 L1149.4 831.2 L1153.1 842.5 L1159.3 854.2 L1164.8 852.8 L1168.7 848.4ZM993.9 703.2 L998.1 696.5 L1016.4 704.7 L1015.0 710.7 L1007.6 716.7 L1003.7 719.1 L1001.8 719.4 L1000.2 712.0ZM1106.1 683.5 L1108.0 689.0 L1115.8 691.0 L1115.9 682.8 L1112.1 679.9ZM840.4 907.9 L844.9 911.2 L856.5 914.6 L856.7 924.7 L854.1 931.8 L845.8 939.6 L844.0 939.1 L838.6 936.2 L830.5 926.2 L833.9 919.1 L837.9 903.7ZM875.8 945.5 L875.4 949.4 L867.9 949.4 L857.6 952.2 L851.7 948.0 L845.8 939.6 L854.1 931.8 L873.5 930.3 L874.9 936.7ZM1210.2 441.5 L1214.2 431.8 L1215.5 417.8 L1224.9 416.2 L1229.1 413.1 L1230.5 428.4 L1233.0 443.2 L1232.9 442.4 L1224.3 443.6ZM1383.0 515.1 L1390.2 527.5 L1391.8 537.2 L1388.5 538.1 L1370.5 540.4 L1366.0 531.7 L1360.5 524.7 L1371.0 519.8 L1379.2 512.2ZM952.9 383.5 L931.6 389.6 L931.6 399.7 L938.4 413.5 L957.1 411.9 L963.6 411.3ZM1566.6 766.3 L1563.9 757.1 L1549.6 750.6 L1538.1 770.6 L1541.4 781.4 L1542.2 782.9 L1564.5 770.3ZM806.2 748.4 L807.8 753.9 L812.8 768.6 L815.2 776.0 L798.7 779.0 L792.8 775.8 L781.2 766.2 L787.3 758.0ZM1074.0 727.5 L1068.3 723.8 L1066.0 725.6 L1061.5 731.5 L1063.4 734.9 L1069.7 736.8 L1074.8 732.1ZM832.7 752.9 L830.9 764.9 L829.2 776.0 L838.7 779.0 L845.9 784.3 L849.5 772.5 L854.2 759.5 L846.0 746.9 L840.9 748.6ZM1075.6 665.0 L1078.0 665.9 L1082.0 671.6 L1074.9 675.2 L1071.4 669.6ZM1497.5 399.2 L1492.0 400.6 L1482.0 405.3 L1492.5 423.2 L1505.2 424.0 L1512.7 413.2ZM1090.4 797.7 L1077.8 807.9 L1080.4 826.2 L1091.4 826.1 L1098.5 823.1 L1101.2 815.1 L1104.4 807.2 L1099.2 804.4 L1094.0 796.7ZM1064.5 661.6 L1063.6 664.1 L1066.4 670.5 L1071.4 669.6 L1075.6 665.0 L1073.2 661.8ZM1524.7 410.3 L1520.7 411.9 L1512.7 413.2 L1497.5 399.2 L1501.2 385.1 L1510.0 382.3 L1521.7 383.6ZM1093.5 660.4 L1098.9 665.4 L1100.2 668.4 L1095.9 669.5 L1088.6 665.6 L1087.5 666.0ZM1079.4 938.4 L1073.3 948.6 L1067.5 947.3 L1058.4 949.5 L1048.8 935.3 L1061.5 921.4ZM851.3 649.0 L843.1 659.0 L841.9 665.4 L831.2 667.4 L822.4 657.3 L826.3 653.9 L831.1 645.7ZM843.6 216.0 L828.9 226.8 L829.3 227.5 L834.0 237.6 L842.0 236.9 L845.9 230.8 L851.9 222.9 L848.8 219.0ZM1187.2 762.1 L1195.9 771.6 L1199.6 777.0 L1205.9 779.1 L1213.2 772.7 L1218.4 765.8 L1214.4 757.0 L1205.6 754.1 L1199.0 753.0 L1193.6 758.4 L1188.6 762.8ZM1092.8 755.5 L1100.8 763.1 L1106.2 769.3 L1112.9 761.5 L1116.1 754.0 L1114.5 747.4 L1107.1 745.6 L1100.7 748.3 L1095.3 753.2ZM834.8 279.7 L859.5 274.2 L859.0 270.4 L857.4 261.3 L854.5 254.8 L857.0 254.8 L842.0 255.7 L832.7 260.9 L832.7 279.5ZM1125.6 667.2 L1121.9 667.5 L1120.0 678.8 L1127.1 682.4 L1132.4 678.0 L1123.3 667.6Z" fill="none" stroke="#2f6f3a" stroke-width="0.95" stroke-linejoin="round"/>
<polygon points="936,185 941,177 955,174 960,180 963,188 950,186 938,189" fill="#80e880" stroke="#2f6f3a" stroke-width="0.95"/>
<polygon points="967,180 980,174 992,176 995,188 983,197.5 970,195" fill="#80e880" stroke="#2f6f3a" stroke-width="0.95"/>
<polygon points="990,172 1003,168 1018,170 1020,188 1006,192 995,188 992,176" fill="#80e880" stroke="#2f6f3a" stroke-width="0.95"/>
<polygon points="843,176 862,174 868,184 846,184" fill="#80e880" stroke="#2f6f3a" stroke-width="0.95"/>
<path d="M937.5 555.0 L947.5 570.0 L952.5 587.5 L965.0 605.0 L977.5 612.5 L996.0 606.0 L1033.8 605.8 L1052.5 603.8 L1065.0 596.0 L1095.0 583.8" fill="none" stroke="#2f6f3a" stroke-width="3.4" stroke-linejoin="round" stroke-linecap="round"/>
<path d="M981.6 632.9 L997.0 623.0 L1014.4 625.0 L1028.0 630.0 L1041.5 625.0 L1055.0 615.5 L1064.7 600.0" fill="none" stroke="#2f6f3a" stroke-width="3.8" stroke-linejoin="round" stroke-linecap="round"/>
<path d="M1065.6 600.0 L1066.6 619.3 L1062.8 634.8 L1051.0 640.6 L1043.4 650.2 L1045.4 658.0 L1053.0 663.8" fill="none" stroke="#2f6f3a" stroke-width="3.8" stroke-linejoin="round" stroke-linecap="round"/>
<path d="M1120.0 638.8 L1130.0 600.0 L1151.0 567.5 L1154.0 550.0 L1151.0 537.5 L1160.0 522.5 L1172.5 513.8 L1185.0 507.5 L1187.5 487.5 L1210.0 478.8 L1227.5 468.8 L1242.5 440.0 L1247.5 415.0 L1260.0 412.5 L1280.0 425.0 L1300.0 446.2 L1330.0 452.5 L1370.0 471.0 L1384.0 471.0 L1412.5 456.0 L1432.5 453.8 L1455.0 438.8 L1475.0 413.8 L1500.0 395.0 L1502.5 403.8 L1507.5 407.5 L1515.0 400.0 L1516.0 377.5 L1512.5 363.8" fill="none" stroke="#2f6f3a" stroke-width="3.4" stroke-linejoin="round" stroke-linecap="round"/>
<path d="M1130.4 600.0 L1124.6 619.3 L1116.9 638.6 L1105.3 661.8 L1103.3 675.4 L1113.0 687.0 L1124.6 696.6 L1136.0 694.7 L1140.0 681.0 L1145.8 671.5 L1155.5 661.8 L1165.0 656.0 L1176.8 653.0 L1182.6 656.0 L1184.5 677.3 L1188.4 696.6 L1184.5 708.2 L1174.8 717.9 L1173.0 725.6 L1182.6 731.4 L1198.0 735.3 L1219.3 737.2 L1229.0 735.3 L1230.9 741.0 L1221.2 752.7 L1209.6 760.4 L1205.8 766.2 L1208.0 774.0 L1211.0 791.0 L1221.0 798.5 L1215.0 804.8 L1200.0 811.0 L1192.5 826.0 L1175.0 843.5 L1166.0 862.0 L1185.0 876.0 L1197.5 896.0 L1195.0 911.0 L1200.0 928.5 L1197.5 951.0 L1196.0 991.0 L1192.5 1012.0" fill="none" stroke="#2f6f3a" stroke-width="3.8" stroke-linejoin="round" stroke-linecap="round"/>
<path d="M1200.0 928.5 L1207.5 946.0 L1225.0 948.5 L1247.5 956.0" fill="none" stroke="#2f6f3a" stroke-width="3.6" stroke-linejoin="round" stroke-linecap="round"/>
<path d="M1256.0 803.0 L1267.5 826.0 L1287.5 834.8 L1305.0 843.5 L1316.0 851.0 L1328.8 868.5 L1325.0 881.0 L1316.0 894.8 L1317.5 898.5 L1320.0 921.0 L1310.0 923.5 L1303.8 929.8" fill="none" stroke="#2f6f3a" stroke-width="4.0" stroke-linejoin="round" stroke-linecap="round"/>
<path d="M1316.0 894.8 L1300.0 888.5 L1296.0 876.0 L1300.0 860.0 L1316.0 851.0" fill="none" stroke="#2f6f3a" stroke-width="3.3" stroke-linejoin="round" stroke-linecap="round"/>
<path d="M943.0 759.0 L926.0 774.0 L921.5 805.0 L906.0 822.5" fill="none" stroke="#2f6f3a" stroke-width="3.8" stroke-linejoin="round" stroke-linecap="round"/>
<path d="M838.0 177.0 L850.0 181.0 L868.0 184.0" fill="none" stroke="#2f6f3a" stroke-width="3.8" stroke-linejoin="round" stroke-linecap="round"/>
<path d="M806.0 202.5 L815.0 210.0 L825.0 222.5 L826.0 230.0" fill="none" stroke="#2f6f3a" stroke-width="3.4" stroke-linejoin="round" stroke-linecap="round"/>
<path d="M817.5 208.8 L830.0 215.0 L837.5 232.5 L837.5 252.5" fill="none" stroke="#2f6f3a" stroke-width="3.0" stroke-linejoin="round" stroke-linecap="round"/>
<path d="M822.5 205.0 L850.0 207.0 L892.5 208.8" fill="none" stroke="#2f6f3a" stroke-width="2.4" stroke-linejoin="round" stroke-linecap="round"/>
<path d="M1030.0 640.0 L1035.5 647.7 L1041.3 655.3 L1045.0 660.0 L1051.1 665.2 L1052.9 666.5 L1060.0 670.0 L1068.6 670.0 L1075.1 667.0 L1080.0 668.0 L1086.5 668.2 L1093.5 671.0 L1100.0 672.0 L1104.5 676.8 L1112.4 685.8 L1120.0 690.0" fill="none" stroke="#2f6f3a" stroke-width="3.4" stroke-linejoin="round" stroke-linecap="round"/>
<path d="M1020.0 700.0 L1026.2 703.5 L1031.3 708.4 L1035.5 713.4 L1040.0 720.0 L1045.1 724.3 L1053.4 724.1 L1062.0 728.0 L1071.8 727.6 L1076.4 726.0 L1085.0 722.0 L1093.5 719.4 L1100.4 717.3 L1110.0 712.0" fill="none" stroke="#2f6f3a" stroke-width="3.4" stroke-linejoin="round" stroke-linecap="round"/>
<path d="M1050.0 630.0 L1057.5 638.1 L1065.1 641.1 L1070.0 648.0 L1072.4 653.3 L1074.4 659.6 L1078.1 668.7 L1082.0 675.0 L1082.5 684.1 L1086.6 690.8 L1090.0 700.0 L1093.4 707.4 L1093.2 714.9 L1096.9 720.6 L1098.0 730.0" fill="none" stroke="#2f6f3a" stroke-width="3.4" stroke-linejoin="round" stroke-linecap="round"/>
<path d="M1015.0 680.0 L1023.8 681.2 L1029.4 688.2 L1035.0 690.0 L1040.5 692.9 L1049.7 693.7 L1058.0 695.0" fill="none" stroke="#2f6f3a" stroke-width="3.4" stroke-linejoin="round" stroke-linecap="round"/>
<path d="M1043.0 652.0 L1046.8 644.3 L1053.5 642.5 L1060.8 634.8 L1066.1 635.4 L1074.0 633.8 L1081.9 638.1 L1086.0 638.6 L1090.1 641.9 L1095.6 646.4 L1098.8 652.8 L1100.1 657.9 L1105.0 662.0" fill="none" stroke="#2f6f3a" stroke-width="3.4" stroke-linejoin="round" stroke-linecap="round"/>
<path d="M1043.0 652.0 L1048.3 660.4 L1051.0 665.7 L1052.2 672.8 L1055.7 675.2 L1060.8 681.0 L1068.4 686.8 L1074.2 690.7 L1082.0 692.8 L1086.8 685.8 L1090.4 679.0 L1093.9 672.8 L1101.2 670.3 L1105.0 662.0" fill="none" stroke="#2f6f3a" stroke-width="3.4" stroke-linejoin="round" stroke-linecap="round"/>
<path d="M1082.0 692.8 L1074.3 694.6 L1071.6 700.5 L1062.8 703.0 L1057.0 708.0 L1048.7 709.4 L1039.6 708.0 L1032.9 705.0 L1024.6 704.5 L1020.0 700.0" fill="none" stroke="#2f6f3a" stroke-width="3.4" stroke-linejoin="round" stroke-linecap="round"/>
<path d="M1039.6 708.0 L1034.9 715.8 L1035.9 722.0 L1031.8 731.4 L1038.0 738.5 L1042.7 743.0 L1047.3 746.9 L1053.3 747.9 L1061.2 751.0 L1070.5 750.7 L1077.3 749.2 L1088.2 749.7 L1093.7 746.9 L1098.4 739.0 L1098.8 732.4 L1101.4 723.7 L1105.2 717.6 L1108.7 711.8 L1113.0 708.2 L1119.5 706.5 L1129.0 701.0 L1134.0 696.6" fill="none" stroke="#2f6f3a" stroke-width="3.4" stroke-linejoin="round" stroke-linecap="round"/>
<path d="M1066.6 665.7 L1070.8 657.1 L1075.0 650.0 L1071.7 641.0 L1072.0 634.0" fill="none" stroke="#2f6f3a" stroke-width="3.4" stroke-linejoin="round" stroke-linecap="round"/>
<path d="M1060.0 681.0 L1055.2 687.1 L1048.0 690.0 L1043.4 696.3 L1040.0 700.0" fill="none" stroke="#2f6f3a" stroke-width="3.4" stroke-linejoin="round" stroke-linecap="round"/>
<path d="M1105.0 662.0 L1111.2 666.2 L1115.7 669.8 L1120.0 672.0 L1123.4 678.6 L1127.0 683.3 L1133.2 689.9 L1136.0 694.7" fill="none" stroke="#2f6f3a" stroke-width="3.4" stroke-linejoin="round" stroke-linecap="round"/>
<path d="M1095.0 725.0 L1099.1 732.0 L1105.7 735.4 L1110.0 740.0 L1112.9 744.2 L1118.9 748.8 L1125.0 752.0" fill="none" stroke="#2f6f3a" stroke-width="3.4" stroke-linejoin="round" stroke-linecap="round"/>
<path d="M1057.0 708.0 L1054.5 715.1 L1053.0 720.6 L1050.0 725.0 L1046.0 732.3 L1044.4 739.8 L1040.0 745.0" fill="none" stroke="#2f6f3a" stroke-width="3.4" stroke-linejoin="round" stroke-linecap="round"/>
<path d="M937.5 555.0 L947.5 570.0 L952.5 587.5 L965.0 605.0 L977.5 612.5 L996.0 606.0 L1033.8 605.8 L1052.5 603.8 L1065.0 596.0 L1095.0 583.8" fill="none" stroke="#80e880" stroke-width="1.6" stroke-linejoin="round" stroke-linecap="round"/>
<path d="M981.6 632.9 L997.0 623.0 L1014.4 625.0 L1028.0 630.0 L1041.5 625.0 L1055.0 615.5 L1064.7 600.0" fill="none" stroke="#80e880" stroke-width="2.0" stroke-linejoin="round" stroke-linecap="round"/>
<path d="M1065.6 600.0 L1066.6 619.3 L1062.8 634.8 L1051.0 640.6 L1043.4 650.2 L1045.4 658.0 L1053.0 663.8" fill="none" stroke="#80e880" stroke-width="2.0" stroke-linejoin="round" stroke-linecap="round"/>
<path d="M1120.0 638.8 L1130.0 600.0 L1151.0 567.5 L1154.0 550.0 L1151.0 537.5 L1160.0 522.5 L1172.5 513.8 L1185.0 507.5 L1187.5 487.5 L1210.0 478.8 L1227.5 468.8 L1242.5 440.0 L1247.5 415.0 L1260.0 412.5 L1280.0 425.0 L1300.0 446.2 L1330.0 452.5 L1370.0 471.0 L1384.0 471.0 L1412.5 456.0 L1432.5 453.8 L1455.0 438.8 L1475.0 413.8 L1500.0 395.0 L1502.5 403.8 L1507.5 407.5 L1515.0 400.0 L1516.0 377.5 L1512.5 363.8" fill="none" stroke="#80e880" stroke-width="1.6" stroke-linejoin="round" stroke-linecap="round"/>
<path d="M1130.4 600.0 L1124.6 619.3 L1116.9 638.6 L1105.3 661.8 L1103.3 675.4 L1113.0 687.0 L1124.6 696.6 L1136.0 694.7 L1140.0 681.0 L1145.8 671.5 L1155.5 661.8 L1165.0 656.0 L1176.8 653.0 L1182.6 656.0 L1184.5 677.3 L1188.4 696.6 L1184.5 708.2 L1174.8 717.9 L1173.0 725.6 L1182.6 731.4 L1198.0 735.3 L1219.3 737.2 L1229.0 735.3 L1230.9 741.0 L1221.2 752.7 L1209.6 760.4 L1205.8 766.2 L1208.0 774.0 L1211.0 791.0 L1221.0 798.5 L1215.0 804.8 L1200.0 811.0 L1192.5 826.0 L1175.0 843.5 L1166.0 862.0 L1185.0 876.0 L1197.5 896.0 L1195.0 911.0 L1200.0 928.5 L1197.5 951.0 L1196.0 991.0 L1192.5 1012.0" fill="none" stroke="#80e880" stroke-width="2.0" stroke-linejoin="round" stroke-linecap="round"/>
<path d="M1200.0 928.5 L1207.5 946.0 L1225.0 948.5 L1247.5 956.0" fill="none" stroke="#80e880" stroke-width="1.8" stroke-linejoin="round" stroke-linecap="round"/>
<path d="M1256.0 803.0 L1267.5 826.0 L1287.5 834.8 L1305.0 843.5 L1316.0 851.0 L1328.8 868.5 L1325.0 881.0 L1316.0 894.8 L1317.5 898.5 L1320.0 921.0 L1310.0 923.5 L1303.8 929.8" fill="none" stroke="#80e880" stroke-width="2.2" stroke-linejoin="round" stroke-linecap="round"/>
<path d="M1316.0 894.8 L1300.0 888.5 L1296.0 876.0 L1300.0 860.0 L1316.0 851.0" fill="none" stroke="#80e880" stroke-width="1.5" stroke-linejoin="round" stroke-linecap="round"/>
<path d="M943.0 759.0 L926.0 774.0 L921.5 805.0 L906.0 822.5" fill="none" stroke="#80e880" stroke-width="2.0" stroke-linejoin="round" stroke-linecap="round"/>
<path d="M838.0 177.0 L850.0 181.0 L868.0 184.0" fill="none" stroke="#80e880" stroke-width="2.0" stroke-linejoin="round" stroke-linecap="round"/>
<path d="M806.0 202.5 L815.0 210.0 L825.0 222.5 L826.0 230.0" fill="none" stroke="#80e880" stroke-width="1.6" stroke-linejoin="round" stroke-linecap="round"/>
<path d="M817.5 208.8 L830.0 215.0 L837.5 232.5 L837.5 252.5" fill="none" stroke="#80e880" stroke-width="1.2" stroke-linejoin="round" stroke-linecap="round"/>
<path d="M822.5 205.0 L850.0 207.0 L892.5 208.8" fill="none" stroke="#80e880" stroke-width="0.6" stroke-linejoin="round" stroke-linecap="round"/>
<path d="M1030.0 640.0 L1035.5 647.7 L1041.3 655.3 L1045.0 660.0 L1051.1 665.2 L1052.9 666.5 L1060.0 670.0 L1068.6 670.0 L1075.1 667.0 L1080.0 668.0 L1086.5 668.2 L1093.5 671.0 L1100.0 672.0 L1104.5 676.8 L1112.4 685.8 L1120.0 690.0" fill="none" stroke="#80e880" stroke-width="1.6" stroke-linejoin="round" stroke-linecap="round"/>
<path d="M1020.0 700.0 L1026.2 703.5 L1031.3 708.4 L1035.5 713.4 L1040.0 720.0 L1045.1 724.3 L1053.4 724.1 L1062.0 728.0 L1071.8 727.6 L1076.4 726.0 L1085.0 722.0 L1093.5 719.4 L1100.4 717.3 L1110.0 712.0" fill="none" stroke="#80e880" stroke-width="1.6" stroke-linejoin="round" stroke-linecap="round"/>
<path d="M1050.0 630.0 L1057.5 638.1 L1065.1 641.1 L1070.0 648.0 L1072.4 653.3 L1074.4 659.6 L1078.1 668.7 L1082.0 675.0 L1082.5 684.1 L1086.6 690.8 L1090.0 700.0 L1093.4 707.4 L1093.2 714.9 L1096.9 720.6 L1098.0 730.0" fill="none" stroke="#80e880" stroke-width="1.6" stroke-linejoin="round" stroke-linecap="round"/>
<path d="M1015.0 680.0 L1023.8 681.2 L1029.4 688.2 L1035.0 690.0 L1040.5 692.9 L1049.7 693.7 L1058.0 695.0" fill="none" stroke="#80e880" stroke-width="1.6" stroke-linejoin="round" stroke-linecap="round"/>
<path d="M1043.0 652.0 L1046.8 644.3 L1053.5 642.5 L1060.8 634.8 L1066.1 635.4 L1074.0 633.8 L1081.9 638.1 L1086.0 638.6 L1090.1 641.9 L1095.6 646.4 L1098.8 652.8 L1100.1 657.9 L1105.0 662.0" fill="none" stroke="#80e880" stroke-width="1.6" stroke-linejoin="round" stroke-linecap="round"/>
<path d="M1043.0 652.0 L1048.3 660.4 L1051.0 665.7 L1052.2 672.8 L1055.7 675.2 L1060.8 681.0 L1068.4 686.8 L1074.2 690.7 L1082.0 692.8 L1086.8 685.8 L1090.4 679.0 L1093.9 672.8 L1101.2 670.3 L1105.0 662.0" fill="none" stroke="#80e880" stroke-width="1.6" stroke-linejoin="round" stroke-linecap="round"/>
<path d="M1082.0 692.8 L1074.3 694.6 L1071.6 700.5 L1062.8 703.0 L1057.0 708.0 L1048.7 709.4 L1039.6 708.0 L1032.9 705.0 L1024.6 704.5 L1020.0 700.0" fill="none" stroke="#80e880" stroke-width="1.6" stroke-linejoin="round" stroke-linecap="round"/>
<path d="M1039.6 708.0 L1034.9 715.8 L1035.9 722.0 L1031.8 731.4 L1038.0 738.5 L1042.7 743.0 L1047.3 746.9 L1053.3 747.9 L1061.2 751.0 L1070.5 750.7 L1077.3 749.2 L1088.2 749.7 L1093.7 746.9 L1098.4 739.0 L1098.8 732.4 L1101.4 723.7 L1105.2 717.6 L1108.7 711.8 L1113.0 708.2 L1119.5 706.5 L1129.0 701.0 L1134.0 696.6" fill="none" stroke="#80e880" stroke-width="1.6" stroke-linejoin="round" stroke-linecap="round"/>
<path d="M1066.6 665.7 L1070.8 657.1 L1075.0 650.0 L1071.7 641.0 L1072.0 634.0" fill="none" stroke="#80e880" stroke-width="1.6" stroke-linejoin="round" stroke-linecap="round"/>
<path d="M1060.0 681.0 L1055.2 687.1 L1048.0 690.0 L1043.4 696.3 L1040.0 700.0" fill="none" stroke="#80e880" stroke-width="1.6" stroke-linejoin="round" stroke-linecap="round"/>
<path d="M1105.0 662.0 L1111.2 666.2 L1115.7 669.8 L1120.0 672.0 L1123.4 678.6 L1127.0 683.3 L1133.2 689.9 L1136.0 694.7" fill="none" stroke="#80e880" stroke-width="1.6" stroke-linejoin="round" stroke-linecap="round"/>
<path d="M1095.0 725.0 L1099.1 732.0 L1105.7 735.4 L1110.0 740.0 L1112.9 744.2 L1118.9 748.8 L1125.0 752.0" fill="none" stroke="#80e880" stroke-width="1.6" stroke-linejoin="round" stroke-linecap="round"/>
<path d="M1057.0 708.0 L1054.5 715.1 L1053.0 720.6 L1050.0 725.0 L1046.0 732.3 L1044.4 739.8 L1040.0 745.0" fill="none" stroke="#80e880" stroke-width="1.6" stroke-linejoin="round" stroke-linecap="round"/>
<path d="M875.5 507.2 L897.8 527.7 L921.9 548.3 L929.1 555.8 L931.0 575.1 L933.3 597.4 L942.2 623.1 L950.0 643.4 L970.4 639.2 L981.0 638.1 L990.8 644.6 L999.6 659.4 L1005.7 677.9 L1006.6 692.3 L1001.5 709.1 L991.6 730.4 L988.2 749.3 L996.3 764.6 L1008.4 771.0 L1025.0 766.5 L1034.8 758.8 L1051.3 755.7 L1070.0 755.7 L1085.7 760.5 L1098.2 757.8 L1102.8 750.6 L1101.2 749.4 L1096.8 755.2 L1086.3 756.5 L1071.0 749.7 L1050.7 749.7 L1032.8 754.2 L1023.0 762.0 L1008.8 765.0 L1001.7 760.0 L996.2 748.3 L998.4 732.4 L1006.1 710.9 L1012.6 693.2 L1011.5 676.7 L1006.0 656.6 L995.2 640.4 L982.2 633.3 L969.6 634.2 L954.0 636.6 L947.8 620.9 L936.7 596.6 L935.0 574.9 L934.9 554.2 L928.1 541.7 L902.2 522.3 L877.0 505.3Z" fill="#80e880" stroke="#2f6f3a" stroke-width="1" stroke-linejoin="round"/>
</g>
</svg>

<!-- right toolbar -->
<div class="a" style="left:1880px;top:170px;width:35px;height:840px;background:#f8f8f8;"></div>
<div class="a" style="left:1915px;top:170px;width:5px;height:840px;background:#efefef;"></div>

<!-- status bar -->
<div class="a" style="left:0;top:1010px;width:1920px;height:22px;background:#f0f0f0;border-top:1px solid #d9d9d9;box-sizing:border-box;"></div>
<div class="a" style="left:3px;top:1013.5px;font-size:12.1px;color:#000;line-height:14px;transform:scaleX(0.935);transform-origin:0 0;">Latitude: 4457361,660&nbsp;&nbsp; Longitude: 484952,299&nbsp;&nbsp; C:\Users\95aki\Downloads\KIRCALAR\KIRCALAR\KIRCALAR\kırcalarITRF.gml&nbsp;&nbsp;&nbsp; Proje: KIRCALAR</div>
<div class="a" style="left:0;top:1031.5px;width:1920px;height:4px;background:#1e1a2c;"></div>

<!-- overlay svg for icons -->
<svg class="a" style="left:0;top:0;" width="1920" height="1035" viewBox="0 0 1920 1035">
<text x="5" y="17" font-family="Liberation Sans" font-weight="bold" font-size="15" fill="#1a6fe0">t</text>
<path d="M5 17.5 L16 17.5" stroke="#444" stroke-width="1"/>
<path d="M1798 10.5 L1808 10.5" stroke="#6d6d6d" stroke-width="1"/>
<rect x="1843.5" y="7.5" width="8" height="7" rx="1" fill="none" stroke="#6d6d6d" stroke-width="1"/>
<path d="M1845.5 5.5 L1851.5 5.5 Q1853.5 5.5 1853.5 7.5 L1853.5 12.5" fill="none" stroke="#6d6d6d" stroke-width="1"/>
<path d="M1889 5 L1899 15 M1899 5 L1889 15" stroke="#6d6d6d" stroke-width="1"/>
<circle cx="57" cy="78.75" r="20" fill="#4caf50"/>
<rect x="47.9" y="76.9" width="18.4" height="4.4" fill="#fff"/><rect x="54.8" y="69.8" width="4.4" height="18.4" fill="#fff"/>
<path d="M157.5 91.5 L145 91.5 Q142 91.5 142 88.5 L142 59 Q142 56 145 56 L159 56 L168 65 L168 83" fill="none" stroke="#000" stroke-width="2.2" stroke-linejoin="round"/>
<path d="M159 56.5 L159.8 61 Q160.5 64 163.5 64 L168 64.5" fill="none" stroke="#000" stroke-width="1.8"/>
<path d="M158.5 85 Q158.5 84 159.5 84 L172 84 L176 88 L176 100.5 Q176 101.5 175 101.5 L159.5 101.5 Q158.5 101.5 158.5 100.5 Z" fill="#fff" stroke="#000" stroke-width="2.2" stroke-linejoin="round"/>
<path d="M162.5 84.5 L162.5 88.5 Q162.5 89.5 163.5 89.5 L169.5 89.5 Q170.5 89.5 170.5 88.5 L170.5 84.5" fill="none" stroke="#000" stroke-width="1.8"/>
<path d="M162 101 L162 94.5 Q162 93.5 163 93.5 L171.5 93.5 Q172.5 93.5 172.5 94.5 L172.5 101" fill="none" stroke="#000" stroke-width="1.8"/>
<path d="M219.5 60 L247.5 60 L255 67.5 L255 95.5 Q255 97.6 253 97.6 L219.5 97.6 Q217.4 97.6 217.4 95.5 L217.4 62 Q217.4 60 219.5 60 Z" fill="none" stroke="#000" stroke-width="2.3" stroke-linejoin="round"/>
<path d="M224.8 60.5 L224.8 71.8 Q224.8 73.4 226.4 73.4 L245 73.4 Q246.6 73.4 246.6 71.8 L246.6 60.5" fill="none" stroke="#000" stroke-width="2"/>
<rect x="240.2" y="63.2" width="2.8" height="6.8" fill="none" stroke="#000" stroke-width="1.6"/>
<path d="M224.8 97 L224.8 82.6 Q224.8 81 226.4 81 L245.5 81 Q247.1 81 247.1 82.6 L247.1 97" fill="none" stroke="#000" stroke-width="2"/>
<circle cx="220.7" cy="94" r="1" fill="#000"/><circle cx="251.3" cy="94" r="1" fill="#000"/>
<path d="M323.5 97.3 L302 97.3 Q298.6 97.3 298.6 93.9 L298.6 64 Q298.6 60.4 302 60.4 L314.5 60.4 L327.3 73.2 L327.3 80.5" fill="none" stroke="#000" stroke-width="2.8" stroke-linejoin="round"/>
<path d="M314.3 61 L314.3 69 Q314.3 72.3 317.6 72.3 L327 72.3" fill="none" stroke="#000" stroke-width="2.3"/>
<path d="M327.5 100.5 L327.5 84.5 M321.8 90 L327.5 84.3 L333.2 90" fill="none" stroke="#000" stroke-width="2.8" stroke-linecap="round" stroke-linejoin="round"/>
<path id="hand" d="M403.6 102 L389.8 82.5 Q388.3 79.8 390.6 78.2 Q392.8 76.8 395 79 L405 88.5 M402.7 79 L402.7 61.5 Q402.7 58.8 405.2 58.8 Q407.7 58.8 407.7 61.5 L407.7 79 M407.7 61 L407.7 58.5 Q407.7 55.9 410.6 55.9 Q413.5 55.9 413.5 58.5 L413.5 79.5 M413.5 64 Q413.5 61 416.4 61 Q419.3 61 419.3 64 L419.3 81 M419.3 71 Q419.3 67.8 422.5 67.8 Q425.8 67.8 425.8 71 L425.8 86 Q425.8 94 421.8 102.3" fill="none" stroke="#3b4048" stroke-width="1.9" stroke-linecap="round" stroke-linejoin="round"/>
<path d="M473 56.5 L507 87 L488 90.2 L473 102.5 Z M477.3 65.6 L477.3 95 L486.9 87 L498.7 84.4 Z" fill="#000" fill-rule="evenodd"/>
<circle cx="564" cy="79.1" r="21.9" fill="none" stroke="#000" stroke-width="1.9"/>
<circle cx="564" cy="68.2" r="2.8" fill="#000"/>
<path d="M560 75 L566.6 75 L566.6 89.7 L567.8 89.7 L567.8 91.5 L560 91.5 L560 89.7 L561.4 89.7 L561.4 76.6 L560 76.6 Z" fill="#000"/>
<path d="M620.3 81.3 L642.8 58.7 L661.6 58.7 L661.6 77.4 L638.3 99.8 Z" fill="none" stroke="#000" stroke-width="2" stroke-linejoin="round"/>
<circle cx="654.4" cy="65.7" r="2.5" fill="none" stroke="#000" stroke-width="1.6"/>
<path d="M694.2 60.6 L724 85.4 L708.3 89.8 L694.6 99" fill="#000" stroke="#000" stroke-width="2.6" stroke-linejoin="round"/>
<circle cx="777" cy="74.2" r="15" fill="none" stroke="#000" stroke-width="2.1"/>
<path d="M787.5 84.8 L800.6 97.6" stroke="#000" stroke-width="3.6"/>
<path d="M769.4 73.8 L785 73.8 M777 66.2 L777 81.8" stroke="#000" stroke-width="1.6"/>
<circle cx="854" cy="74.2" r="15" fill="none" stroke="#000" stroke-width="2.1"/>
<path d="M864.5 84.8 L877.6 97.6" stroke="#000" stroke-width="3.6"/>
<path d="M846.2 73.8 L861.8 73.8" stroke="#000" stroke-width="1.6"/>
<circle cx="944" cy="74.2" r="15" fill="none" stroke="#000" stroke-width="2.1"/>
<path d="M954.5 84.8 L967.6 97.6" stroke="#000" stroke-width="3.6"/>
<path d="M937 67 L951 81 M951 67 L937 81" stroke="#000" stroke-width="1.8"/>
<path d="M936.2 71.5 L936.2 66.2 L941.5 66.2 M946.5 66.2 L951.8 66.2 L951.8 71.5 M951.8 76.9 L951.8 82.2 L946.5 82.2 M941.5 82.2 L936.2 82.2 L936.2 76.9" fill="none" stroke="#000" stroke-width="1.9"/>
<polygon points="1035.6,67.5 1052.25,56.5 1070.4,62.6 1079.8,82.6 1066.6,101 1035.5,101" fill="none" stroke="#000" stroke-width="1.9" stroke-linejoin="round"/>
<circle cx="1035.6" cy="67.5" r="1.7" fill="#000"/>
<circle cx="1052.25" cy="56.5" r="1.7" fill="#000"/>
<circle cx="1070.4" cy="62.6" r="1.7" fill="#000"/>
<circle cx="1079.8" cy="82.6" r="1.7" fill="#000"/>
<circle cx="1066.6" cy="101" r="1.7" fill="#000"/>
<circle cx="1035.5" cy="101" r="1.7" fill="#000"/>
<path d="M1146.5 65.3 L1173.5 65.3 L1173.5 92.3 L1146.5 92.3 Z" fill="none" stroke="#888" stroke-width="2.2"/>
<circle cx="1146.5" cy="65.3" r="3.3" fill="#fff" stroke="#888" stroke-width="2.1"/>
<circle cx="1160" cy="65.3" r="3.3" fill="#fff" stroke="#888" stroke-width="2.1"/>
<circle cx="1173.5" cy="65.3" r="3.3" fill="#fff" stroke="#888" stroke-width="2.1"/>
<circle cx="1146.5" cy="79" r="3.3" fill="#fff" stroke="#888" stroke-width="2.1"/>
<circle cx="1160" cy="79" r="3.3" fill="#fff" stroke="#888" stroke-width="2.1"/>
<circle cx="1173.5" cy="79" r="3.3" fill="#fff" stroke="#888" stroke-width="2.1"/>
<circle cx="1146.5" cy="92.3" r="3.3" fill="#fff" stroke="#888" stroke-width="2.1"/>
<circle cx="1160" cy="92.3" r="3.3" fill="#fff" stroke="#888" stroke-width="2.1"/>
<circle cx="1173.5" cy="92.3" r="4.3" fill="#888"/>
<path d="M1248.2 63 L1248.2 97.8 Q1248.2 100.2 1250.6 100.2 L1273.8 100.2 Q1276.2 100.2 1276.2 97.8 L1276.2 63" fill="none" stroke="#000" stroke-width="2.1"/>
<path d="M1245 62.5 L1279.3 62.5" stroke="#000" stroke-width="2"/>
<path d="M1256.6 62 L1256.6 59.6 Q1256.6 58.2 1258 58.2 L1266.4 58.2 Q1267.8 58.2 1267.8 59.6 L1267.8 62" fill="none" stroke="#000" stroke-width="1.9"/>
<path d="M1254.6 74.6 L1269.6 89.4 M1269.6 74.6 L1254.6 89.4" stroke="#000" stroke-width="1.5"/>
<path d="M356 161 L356 155 L362 155" fill="none" stroke="#5a86c8" stroke-width="1.2"/><path d="M359 158 L363.5 162.5 M360.5 162.5 L363.5 162.5 L363.5 159.5" fill="none" stroke="#3f6fba" stroke-width="1.5"/><path d="M727 161 L727 155 L733 155" fill="none" stroke="#5a86c8" stroke-width="1.2"/><path d="M730 158 L734.5 162.5 M731.5 162.5 L734.5 162.5 L734.5 159.5" fill="none" stroke="#3f6fba" stroke-width="1.5"/><path d="M991 161 L991 155 L997 155" fill="none" stroke="#5a86c8" stroke-width="1.2"/><path d="M994 158 L998.5 162.5 M995.5 162.5 L998.5 162.5 L998.5 159.5" fill="none" stroke="#3f6fba" stroke-width="1.5"/><path d="M1305 161 L1305 155 L1311 155" fill="none" stroke="#5a86c8" stroke-width="1.2"/><path d="M1308 158 L1312.5 162.5 M1309.5 162.5 L1312.5 162.5 L1312.5 159.5" fill="none" stroke="#3f6fba" stroke-width="1.5"/>
<g transform="translate(1888.4 184) scale(0.6739) translate(-473 -56.5)"><path d="M473 56.5 L507 87 L488 90.2 L473 102.5 Z M477.3 65.6 L477.3 95 L486.9 87 L498.7 84.4 Z" fill="#000" fill-rule="evenodd"/></g>
<g transform="translate(1888.6 226.5) scale(0.6951) translate(-693 -59)"><path d="M694.2 60.6 L724 85.4 L708.3 89.8 L694.6 99" fill="#000" stroke="#000" stroke-width="2.6" stroke-linejoin="round"/></g>
<g transform="translate(1883.6 264) scale(0.7234) translate(-388 -55)"><use href="#hand"/></g>
<rect x="1882" y="305" width="32" height="1" fill="#c9c9c9"/>
<g transform="translate(1882.3 311.8) scale(0.695 0.735) translate(-1035 -56)"><polygon points="1035.6,67.5 1052.25,56.5 1070.4,62.6 1079.8,82.6 1066.6,101 1035.5,101" fill="none" stroke="#000" stroke-width="2.4" stroke-linejoin="round"/><circle cx="1035.6" cy="67.5" r="2.2" fill="#000"/><circle cx="1052.25" cy="56.5" r="2.2" fill="#000"/><circle cx="1070.4" cy="62.6" r="2.2" fill="#000"/><circle cx="1079.8" cy="82.6" r="2.2" fill="#000"/><circle cx="1066.6" cy="101" r="2.2" fill="#000"/><circle cx="1035.5" cy="101" r="2.2" fill="#000"/></g>
<g transform="translate(1886 357) scale(0.6667) translate(-1142 -61)"><path d="M1146.5 65.3 L1173.5 65.3 L1173.5 92.3 L1146.5 92.3 Z" fill="none" stroke="#888" stroke-width="2.6"/><circle cx="1146.5" cy="65.3" r="3.4" fill="#f8f8f8" stroke="#888" stroke-width="2.6"/><circle cx="1160" cy="65.3" r="3.4" fill="#f8f8f8" stroke="#888" stroke-width="2.6"/><circle cx="1173.5" cy="65.3" r="3.4" fill="#f8f8f8" stroke="#888" stroke-width="2.6"/><circle cx="1146.5" cy="79" r="3.4" fill="#f8f8f8" stroke="#888" stroke-width="2.6"/><circle cx="1160" cy="79" r="3.4" fill="#f8f8f8" stroke="#888" stroke-width="2.6"/><circle cx="1173.5" cy="79" r="3.4" fill="#f8f8f8" stroke="#888" stroke-width="2.6"/><circle cx="1146.5" cy="92.3" r="3.4" fill="#f8f8f8" stroke="#888" stroke-width="2.6"/><circle cx="1160" cy="92.3" r="3.4" fill="#f8f8f8" stroke="#888" stroke-width="2.6"/><circle cx="1173.5" cy="92.3" r="4.5" fill="#888"/></g>
<rect x="1882" y="393" width="32" height="1" fill="#c9c9c9"/>
<g transform="translate(1887 400) scale(0.63 0.735) translate(-1245 -57)"><path d="M1248.2 63 L1248.2 97.8 Q1248.2 100.2 1250.6 100.2 L1273.8 100.2 Q1276.2 100.2 1276.2 97.8 L1276.2 63" fill="none" stroke="#000" stroke-width="2.6"/><path d="M1245 62.5 L1279.3 62.5" stroke="#000" stroke-width="2.5"/><path d="M1256.6 62 L1256.6 59.6 Q1256.6 58.2 1258 58.2 L1266.4 58.2 Q1267.8 58.2 1267.8 59.6 L1267.8 62" fill="none" stroke="#000" stroke-width="2.4"/><path d="M1254.6 74.6 L1269.6 89.4 M1269.6 74.6 L1254.6 89.4" stroke="#000" stroke-width="2"/></g>
<rect x="1884.0" y="173" width="1.6" height="1.6" fill="#999"/>
<rect x="1887.6" y="173" width="1.6" height="1.6" fill="#999"/>
<rect x="1891.2" y="173" width="1.6" height="1.6" fill="#999"/>
<rect x="1894.8" y="173" width="1.6" height="1.6" fill="#999"/>
<rect x="1898.4" y="173" width="1.6" height="1.6" fill="#999"/>
<rect x="1902.0" y="173" width="1.6" height="1.6" fill="#999"/>
<rect x="1905.6" y="173" width="1.6" height="1.6" fill="#999"/>
<rect x="1909.2" y="173" width="1.6" height="1.6" fill="#999"/>
<!-- tree icons -->
<rect x="4.5" y="181.5" width="8" height="8" fill="#fff" stroke="#7a7a7a" stroke-width="1"/><path d="M6.5 185.5 L10.5 185.5" stroke="#000" stroke-width="1"/>
<rect x="34.5" y="201.5" width="8" height="8" fill="#fff" stroke="#7a7a7a" stroke-width="1"/><path d="M36.5 205.5 L40.5 205.5" stroke="#000" stroke-width="1"/>
<rect x="34.5" y="241.5" width="8" height="8" fill="#fff" stroke="#7a7a7a" stroke-width="1"/><path d="M36.5 245.5 L40.5 245.5" stroke="#000" stroke-width="1"/>
<rect x="50.5" y="197.5" width="12" height="12" fill="#f4f4f4" stroke="#8c8c8c" stroke-width="1"/><path d="M53.5 203 L56 206.5 L60 199.5" fill="none" stroke="#1c3fa8" stroke-width="1.5"/>
<rect x="50.5" y="237.5" width="12" height="12" fill="#f4f4f4" stroke="#8c8c8c" stroke-width="1"/><path d="M53.5 243 L56 246.5 L60 239.5" fill="none" stroke="#1c3fa8" stroke-width="1.5"/>
<g stroke="#222" stroke-width="0.9" fill="#f3e600">
<path d="M19.5 189 L24 186 L34 186 L29.5 189 Z"/><path d="M19.5 186 L24 183 L34 183 L29.5 186 Z"/><path d="M19.5 183 L24 180 L34 180 L29.5 183 Z"/>
</g>
</svg>
</body></html>
